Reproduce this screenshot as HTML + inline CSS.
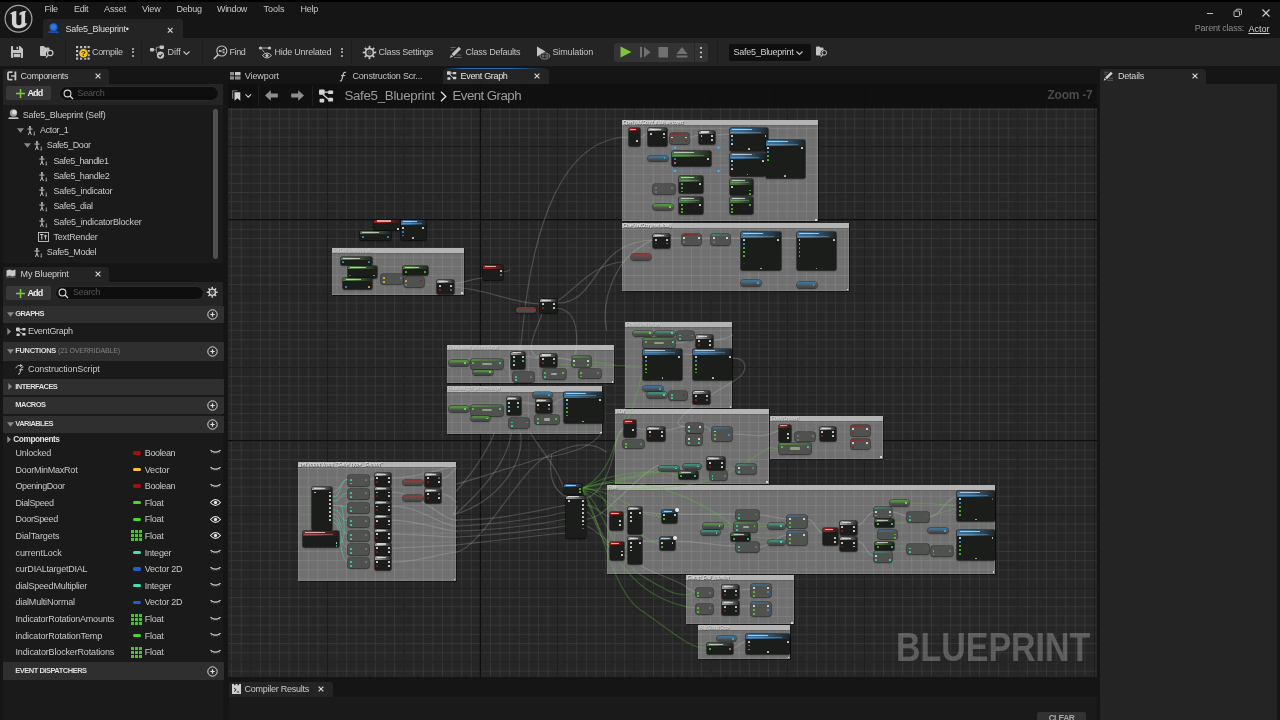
<!DOCTYPE html>
<html><head><meta charset="utf-8"><title>Safe5_Blueprint</title>
<style>
*{box-sizing:border-box;margin:0;padding:0}
html,body{width:1280px;height:720px;overflow:hidden;background:#151515}
body{font-family:"Liberation Sans",sans-serif;color:#c0c0c0;font-size:9px;position:relative}
.a{position:absolute}
.t{position:absolute;white-space:nowrap;line-height:1.15}
#root{position:absolute;left:0;top:0;width:1280px;height:720px;overflow:hidden;will-change:transform}
svg{position:absolute;overflow:visible}
#graph{position:absolute;left:227.5px;top:84px;width:869px;height:593px;overflow:hidden;background:#262626}
#graph .cm{position:absolute;background-color:rgba(131,131,131,.8);background-image:linear-gradient(90deg,rgba(255,255,255,.07) 0,rgba(255,255,255,.07) .9px,transparent .9px),linear-gradient(rgba(255,255,255,.07) 0,rgba(255,255,255,.07) .9px,transparent .9px);background-size:9.5875px 9.205px;box-shadow:inset -.6px -.6px 0 rgba(175,175,175,.45),inset .6px 0 0 rgba(175,175,175,.3),.8px .8px 0 rgba(6,6,6,.7)}
#graph .cm i{position:absolute;left:0;right:0;top:0;height:5.4px;background:#b4b4b4;box-shadow:0 .8px 0 rgba(70,70,70,.35)}
#graph .cm u{position:absolute;left:1.3px;top:.2px;font-size:4.8px;line-height:5.4px;white-space:nowrap;color:#f4f4f4;text-decoration:none;font-style:italic;text-shadow:.5px .5px 0 rgba(0,0,0,.75);opacity:.8}
#graph .cm::after{content:"";position:absolute;right:.8px;bottom:.8px;width:1.7px;height:1.7px;background:#e8e8e8;opacity:.85}
.n{position:absolute;background:#1b1d1b;border-radius:1.5px;box-shadow:0 0 0 .8px rgba(10,10,10,.6),0 1px 2px rgba(0,0,0,.5);overflow:hidden}
.g{position:absolute;background:#505250;border-radius:2.5px;box-shadow:0 0 0 .8px rgba(30,30,30,.55),0 1px 2px rgba(0,0,0,.4);overflow:hidden}
.h{position:absolute;left:0;right:0;top:0}
.p{position:absolute;width:1.9px;height:1.9px;border-radius:.6px;opacity:.8}
</style></head><body><div id="root">
<div class="a" style="left:0px;top:0px;width:1280px;height:2px;background:#000;"></div>
<div class="a" style="left:0px;top:2px;width:1280px;height:36px;background:#151515;"></div>
<svg style="left:4px;top:4px" width="30" height="30" viewBox="0 0 30 30"><circle cx="14.500" cy="14.750" r="13.400" fill="#1a1a1a" stroke="#a4a4a4" stroke-width="1.200"/><path d="M5.500 10.400C7.200 8.300 9.500 7.200 12.300 7V18.500C12.300 20.200 13.200 21.200 14.900 21.200C16.500 21.200 17.400 20.400 17.400 18.800V10.200L15.500 11.500V9C17.500 7.600 19.800 6.900 22.800 6.800C21.500 7.800 21.100 8.800 21.100 10V18.300C21.100 19.500 21.900 19.800 23.400 18.900C22 22.200 18.700 24.300 14.600 24.300C10.600 24.300 7.900 22.200 7.900 18.400V11.300C7.900 10.100 7 9.700 5.500 10.400Z" fill="#d4d4d4"/></svg>
<div class="t" style="left:44.6px;top:4.3px;font-size:9px;color:#c6c6c6;letter-spacing:-0.351px;">File</div>
<div class="t" style="left:74px;top:4.3px;font-size:9px;color:#c6c6c6;letter-spacing:-0.377px;">Edit</div>
<div class="t" style="left:104px;top:4.3px;font-size:9px;color:#c6c6c6;letter-spacing:-0.082px;">Asset</div>
<div class="t" style="left:142px;top:4.3px;font-size:9px;color:#c6c6c6;letter-spacing:-0.236px;">View</div>
<div class="t" style="left:176.6px;top:4.3px;font-size:9px;color:#c6c6c6;letter-spacing:-0.304px;">Debug</div>
<div class="t" style="left:217px;top:4.3px;font-size:9px;color:#c6c6c6;letter-spacing:-0.335px;">Window</div>
<div class="t" style="left:263.5px;top:4.3px;font-size:9px;color:#c6c6c6;letter-spacing:-0.002px;">Tools</div>
<div class="t" style="left:300.5px;top:4.3px;font-size:9px;color:#c6c6c6;letter-spacing:-0.252px;">Help</div>
<div class="a" style="left:43px;top:19px;width:140px;height:19px;background:#242424;border-radius:3px 3px 0 0"></div>
<svg style="left:47px;top:22px" width="13" height="13" viewBox="0 0 13 13"><circle cx="6.500" cy="5.200" r="4" fill="#1d5fd0"/><circle cx="6.500" cy="4.800" r="2.600" fill="#2f78e8"/><rect x="1.500" y="9.300" width="10" height="1.800" rx=".6" fill="#1a4fb0"/></svg>
<div class="t" style="left:65.5px;top:24px;font-size:9px;color:#dcdcdc;letter-spacing:-0.247px;">Safe5_Blueprint•</div>
<div class="t" style="left:167px;top:23.5px;font-size:11px;color:#c8c8c8;font-weight:bold">×</div>
<div class="a" style="left:1207px;top:13px;width:6px;height:1px;background:#bdbdbd;"></div>
<svg style="left:1233px;top:8px" width="10" height="10" viewBox="0 0 10 10"><rect x="1" y="3" width="5.500" height="5.500" rx="1" fill="none" stroke="#bdbdbd" stroke-width="1"/><path d="M3 3V2.200a1 1 0 0 1 1-1h3.500a1 1 0 0 1 1 1v3.500a1 1 0 0 1-1 1H6.500" fill="none" stroke="#bdbdbd" stroke-width="1"/></svg>
<svg style="left:1262px;top:9px" width="8" height="8" viewBox="0 0 8 8"><path d="M.5.500l7 7M7.500.5l-7 7" stroke="#d0d0d0" stroke-width="1.100"/></svg>
<div class="t" style="left:1194.8px;top:23.3px;font-size:9px;color:#8a8a8a;letter-spacing:-0.217px;">Parent class:</div>
<div class="t" style="left:1248.4px;top:23.8px;font-size:9px;color:#d2d2d2;letter-spacing:0.019px;text-decoration:underline">Actor</div>
<div class="a" style="left:0px;top:38px;width:1280px;height:28px;background:#242424;"></div>
<div class="a" style="left:65px;top:40px;width:1px;height:24px;background:#1c1c1c;"></div>
<div class="a" style="left:141px;top:40px;width:1px;height:24px;background:#1c1c1c;"></div>
<div class="a" style="left:202px;top:40px;width:1px;height:24px;background:#1c1c1c;"></div>
<div class="a" style="left:351px;top:40px;width:1px;height:24px;background:#1c1c1c;"></div>
<div class="a" style="left:717px;top:40px;width:1px;height:24px;background:#1c1c1c;"></div>
<svg style="left:11px;top:46px" width="12" height="12" viewBox="0 0 12 12"><path d="M0 1a1 1 0 0 1 1-1h8l3 3v8a1 1 0 0 1-1 1H1a1 1 0 0 1-1-1z" fill="#c4c4c4"/><rect x="2" y="0" width="6" height="4" fill="#242424"/><rect x="5.500" y=".8" width="1.600" height="2.400" fill="#c4c4c4"/><rect x="2" y="7" width="8" height="5" fill="#242424"/><rect x="2.700" y="7.800" width="6.600" height="3.400" fill="#c4c4c4"/></svg>
<svg style="left:40px;top:45px" width="16" height="14" viewBox="0 0 16 14"><path d="M0 2a1 1 0 0 1 1-1h3l1 1.500h3.500a1 1 0 0 1 1 1V5a4 4 0 0 0-3 6H1a1 1 0 0 1-1-1z" fill="#c4c4c4"/><circle cx="10.200" cy="8" r="2.700" fill="none" stroke="#c4c4c4" stroke-width="1.200"/><path d="M8.300 10l-2.300 2.600" stroke="#c4c4c4" stroke-width="1.400"/></svg>
<svg style="left:75px;top:45px" width="16" height="15" viewBox="0 0 16 15"><g fill="#bdbdbd"><rect x="1" y="1" width="2.200" height="2.200"/><rect x="5" y="1" width="2.200" height="2.200"/><rect x="9" y="1" width="2.200" height="2.200"/><rect x="12.500" y="1" width="2.200" height="2.200"/><rect x="1" y="5" width="2.200" height="2.200"/><rect x="1" y="9" width="2.200" height="2.200"/><rect x="1" y="12.500" width="2.200" height="2.200"/><rect x="5" y="12.500" width="2.200" height="2.200"/><rect x="9" y="12.500" width="2.200" height="2.200"/><rect x="12.500" y="12.500" width="2.200" height="2.200"/><rect x="12.500" y="9" width="2.200" height="2.200"/><rect x="12.500" y="5" width="2.200" height="2.200"/></g><circle cx="8.500" cy="8.300" r="4.700" fill="#f2c60e" stroke="#242424" stroke-width=".8"/><text x="8.500" y="11.300" font-family="Liberation Sans" font-weight="bold" font-size="8" text-anchor="middle" fill="#1a1a1a">?</text></svg>
<div class="t" style="left:92px;top:47px;font-size:9px;color:#c4c4c4;letter-spacing:-0.345px;">Compile</div>
<div class="a" style="left:132.3px;top:47.7px;width:2px;height:2px;background:#c4c4c4;border-radius:1px"></div>
<div class="a" style="left:132.3px;top:51.4px;width:2px;height:2px;background:#c4c4c4;border-radius:1px"></div>
<div class="a" style="left:132.3px;top:55.1px;width:2px;height:2px;background:#c4c4c4;border-radius:1px"></div>
<svg style="left:150px;top:45px" width="16" height="15" viewBox="0 0 16 15"><rect x="0" y="3" width="4" height="3.400" rx=".8" fill="#c4c4c4"/><rect x="9.500" y=".5" width="4.500" height="3.400" rx=".8" fill="#c4c4c4"/><path d="M4 4.700h2.500V2.200h3M6.500 4.700V8" stroke="#8a8a8a" stroke-width=".9" fill="none"/><circle cx="10.500" cy="10.200" r="3.600" fill="#c4c4c4"/><path d="M8.800 10.200l1.300 1.400 2.300-2.700" stroke="#242424" stroke-width="1.100" fill="none"/></svg>
<div class="t" style="left:167.5px;top:47px;font-size:9px;color:#c4c4c4;letter-spacing:-0.059px;">Diff</div>
<svg style="left:183.3px;top:50.5px" width="7" height="4.0" viewBox="0 0 7 4"><path d="M.5.500l3 3 3-3" fill="none" stroke="#c4c4c4" stroke-width="1.100"/></svg>
<svg style="left:213px;top:45px" width="15" height="15" viewBox="0 0 15 15"><circle cx="8.800" cy="6" r="5" fill="none" stroke="#c4c4c4" stroke-width="1.100"/><path d="M5.200 9.600L.8 14" stroke="#c4c4c4" stroke-width="1.500"/><circle cx="6.800" cy="6" r="1" fill="#c4c4c4"/><circle cx="10.800" cy="4.600" r=".9" fill="#c4c4c4"/><circle cx="10.800" cy="7.400" r=".9" fill="#c4c4c4"/><path d="M6.800 6L10.800 4.600M6.800 6l4 1.400" stroke="#c4c4c4" stroke-width=".6"/></svg>
<div class="t" style="left:229.5px;top:47px;font-size:9px;color:#c4c4c4;letter-spacing:-0.377px;">Find</div>
<svg style="left:258px;top:45px" width="15" height="15" viewBox="0 0 15 15"><circle cx="2.500" cy="3" r="1.600" fill="#c4c4c4"/><circle cx="11.500" cy="3" r="1.600" fill="#c4c4c4"/><path d="M2.500 3h9M4 4.500L6.500 7.500" stroke="#c4c4c4" stroke-width=".8"/><path d="M4.500 10.500q4.500-5 9 0q-4.500 5-9 0z" fill="none" stroke="#c4c4c4" stroke-width="1"/><circle cx="9" cy="10.500" r="1.500" fill="#c4c4c4"/></svg>
<div class="t" style="left:274.5px;top:47px;font-size:9px;color:#c4c4c4;letter-spacing:-0.235px;">Hide Unrelated</div>
<div class="a" style="left:341px;top:47.7px;width:2px;height:2px;background:#c4c4c4;border-radius:1px"></div>
<div class="a" style="left:341px;top:51.4px;width:2px;height:2px;background:#c4c4c4;border-radius:1px"></div>
<div class="a" style="left:341px;top:55.1px;width:2px;height:2px;background:#c4c4c4;border-radius:1px"></div>
<svg style="left:363px;top:46px" width="13" height="13" viewBox="0 0 13 13"><rect x="5.600" y="-.2" width="1.800" height="3" fill="#c4c4c4" transform="rotate(0 6.500 6.500)"/><rect x="5.600" y="-.2" width="1.800" height="3" fill="#c4c4c4" transform="rotate(45 6.500 6.500)"/><rect x="5.600" y="-.2" width="1.800" height="3" fill="#c4c4c4" transform="rotate(90 6.500 6.500)"/><rect x="5.600" y="-.2" width="1.800" height="3" fill="#c4c4c4" transform="rotate(135 6.500 6.500)"/><rect x="5.600" y="-.2" width="1.800" height="3" fill="#c4c4c4" transform="rotate(180 6.500 6.500)"/><rect x="5.600" y="-.2" width="1.800" height="3" fill="#c4c4c4" transform="rotate(225 6.500 6.500)"/><rect x="5.600" y="-.2" width="1.800" height="3" fill="#c4c4c4" transform="rotate(270 6.500 6.500)"/><rect x="5.600" y="-.2" width="1.800" height="3" fill="#c4c4c4" transform="rotate(315 6.500 6.500)"/><circle cx="6.500" cy="6.500" r="3.900" fill="none" stroke="#c4c4c4" stroke-width="1.700"/><circle cx="6.500" cy="6.500" r="1.500" fill="none" stroke="#c4c4c4" stroke-width=".6" opacity=".7"/></svg>
<div class="t" style="left:378.5px;top:47px;font-size:9px;color:#c4c4c4;letter-spacing:-0.209px;">Class Settings</div>
<svg style="left:449px;top:46px" width="13" height="13" viewBox="0 0 13 13"><path d="M1.500 1.500h5M1.500 4h3M5 11.500h7.500M7.500 9h5" stroke="#6e6e6e" stroke-width=".9"/><path d="M9.800.8l2.200 2.200-7.200 7.200-2.200-2.200z" fill="#c4c4c4"/><path d="M2 8.800l2 2-3.200 1.200z" fill="#c4c4c4"/></svg>
<div class="t" style="left:465.5px;top:47px;font-size:9px;color:#c4c4c4;letter-spacing:-0.223px;">Class Defaults</div>
<svg style="left:536px;top:45px" width="15" height="15" viewBox="0 0 15 15"><path d="M1 1.500v10l8.500-5z" fill="#c4c4c4"/><ellipse cx="8.800" cy="11" rx="4.700" ry="3" fill="#242424" stroke="#9a9a9a" stroke-width=".8"/><circle cx="7" cy="11" r="1" fill="none" stroke="#9a9a9a" stroke-width=".7"/><circle cx="10.800" cy="11" r="1.200" fill="none" stroke="#9a9a9a" stroke-width=".7"/></svg>
<div class="t" style="left:552.5px;top:47px;font-size:9px;color:#c4c4c4;letter-spacing:-0.142px;">Simulation</div>
<div class="a" style="left:614px;top:43px;width:94px;height:18.5px;background:#333;border-radius:3px"></div>
<div class="a" style="left:693.5px;top:43px;width:1px;height:18.5px;background:#262626;"></div>
<svg style="left:614px;top:43px" width="94" height="19" viewBox="0 0 94 19"><path d="M6.500 3.500v11l11-5.500z" fill="#7dc43c"/><rect x="26" y="4" width="2" height="10.500" fill="#707070"/><path d="M30 4v10.500l6.500-5.250z" fill="#707070"/><rect x="44.500" y="4" width="9.500" height="10.500" fill="#707070"/><path d="M62.500 11l5.500-7 5.500 7z" fill="#707070"/><rect x="62.500" y="12.500" width="11" height="2" fill="#707070"/><circle cx="87" cy="5" r="1" fill="#d8d8d8"/><circle cx="87" cy="9.500" r="1" fill="#d8d8d8"/><circle cx="87" cy="14" r="1" fill="#d8d8d8"/></svg>
<div class="a" style="left:728.5px;top:43.5px;width:82.5px;height:17.5px;background:#0f0f0f;border-radius:2px"></div>
<div class="t" style="left:733.5px;top:47px;font-size:9px;color:#d0d0d0;letter-spacing:-0.270px;">Safe5_Blueprint</div>
<svg style="left:796px;top:50.5px" width="7" height="4.0" viewBox="0 0 7 4"><path d="M.5.500l3 3 3-3" fill="none" stroke="#c4c4c4" stroke-width="1.100"/></svg>
<svg style="left:816px;top:46px" width="13" height="12" viewBox="0 0 13 12"><path d="M0 1.500a1 1 0 0 1 1-1h2.500l.8 1h2.200a1 1 0 0 1 1 1V4a3.400 3.400 0 0 0-2.300 5.500H1a1 1 0 0 1-1-1z" fill="#c4c4c4"/><circle cx="8.300" cy="6.800" r="2.300" fill="none" stroke="#c4c4c4" stroke-width="1"/><path d="M6.700 8.500l-1.900 2.200" stroke="#c4c4c4" stroke-width="1.200"/></svg>
<div class="a" style="left:3px;top:68.5px;width:105.5px;height:16px;background:#242424;border-radius:3px 3px 0 0"></div>
<svg style="left:6.500px;top:71px" width="10" height="10" viewBox="0 0 10 10"><path d="M5.500 1.200H2a1 1 0 0 0-1 1v5.400a1 1 0 0 0 1 1h3.500" fill="none" stroke="#c8c8c8" stroke-width="1.700"/><path d="M4 5h4.500" stroke="#c8c8c8" stroke-width="1.400"/><rect x="7.500" y="0.500" width="1.800" height="8.800" fill="#c8c8c8"/></svg>
<div class="t" style="left:20.6px;top:71px;font-size:9px;color:#d0d0d0;letter-spacing:-0.353px;">Components</div>
<svg style="left:94.5px;top:73px" width="6" height="6" viewBox="0 0 6 6"><path d="M.6.600l4.800 4.800M5.400.6L.6 5.400" stroke="#d4d4d4" stroke-width="1.200"/></svg>
<div class="a" style="left:3px;top:84px;width:220.4px;height:20.7px;background:#242424;"></div>
<div class="a" style="left:3px;top:104.7px;width:220.4px;height:158px;background:#1a1a1a;"></div>
<div class="a" style="left:6px;top:86.2px;width:44.5px;height:13.8px;background:#383838;border-radius:2px"></div><svg style="left:15.5px;top:88.7px" width="9" height="9" viewBox="0 0 9 9"><path d="M4.500 0v9M0 4.500h9" stroke="#7ccf32" stroke-width="1.500"/></svg><div class="t" style="left:27.5px;top:88.2px;font-size:9px;color:#f0f0f0;letter-spacing:-0.932px;font-weight:bold">Add</div>
<div class="a" style="left:60px;top:87px;width:157.5px;height:12.5px;background:#0e0e0e;border-radius:6.500px;box-shadow:0 0 0 1px #2b2b2b"></div><svg style="left:62.5px;top:88.5px" width="11" height="11" viewBox="0 0 11 11"><circle cx="4.500" cy="4.500" r="3.400" fill="none" stroke="#d8d8d8" stroke-width="1.100"/><path d="M7 7l3 3" stroke="#d8d8d8" stroke-width="1.300"/></svg><div class="t" style="left:77.5px;top:87.7px;font-size:9px;color:#555;letter-spacing:-0.253px;">Search</div>
<div class="a" style="left:213.2px;top:108.5px;width:4.6px;height:150.5px;background:#505050;border-radius:2.300px"></div>
<svg style="left:8px;top:109.1px" width="11" height="11" viewBox="0 0 11 11"><circle cx="5.500" cy="4" r="3.700" fill="#9a9a9a"/><circle cx="6.300" cy="3.300" r="2.300" fill="#dadada"/><path d="M1 8.300h9l.8 1.800H.2z" fill="#bdbdbd"/></svg>
<div class="t" style="left:22.8px;top:109.5px;font-size:9px;color:#c8c8c8;letter-spacing:-0.248px;">Safe5_Blueprint (Self)</div>
<svg style="left:17px;top:127.7px" width="7" height="5" viewBox="0 0 7 5"><path d="M0 .3h7L3.500 4.700z" fill="#8a8a8a"/></svg>
<svg style="left:26.7px;top:125.7px" width="9.300" height="9.300" viewBox="0 0 11 11"><circle cx="3.500" cy="1.300" r="1.200" fill="#d0d0d0"/><path d="M.5 3.600h6M3.500 2.500v4M3.500 6.300L1.600 10.500M3.500 6.300l1.600 4.200" stroke="#d0d0d0" stroke-width="1.100" fill="none"/><path d="M8.600 6.500v4M7.600 10.500h2" stroke="#b0b0b0" stroke-width="1"/></svg>
<div class="t" style="left:40px;top:124.9px;font-size:9px;color:#c8c8c8;letter-spacing:-0.360px;">Actor_1</div>
<svg style="left:23.5px;top:143.0px" width="7" height="5" viewBox="0 0 7 5"><path d="M0 .3h7L3.500 4.700z" fill="#8a8a8a"/></svg>
<svg style="left:33.7px;top:141.0px" width="9.300" height="9.300" viewBox="0 0 11 11"><circle cx="3.500" cy="1.300" r="1.200" fill="#d0d0d0"/><path d="M.5 3.600h6M3.500 2.500v4M3.500 6.300L1.600 10.500M3.500 6.300l1.600 4.200" stroke="#d0d0d0" stroke-width="1.100" fill="none"/><path d="M8.600 6.500v4M7.600 10.500h2" stroke="#b0b0b0" stroke-width="1"/></svg>
<div class="t" style="left:46.8px;top:140.20000000000002px;font-size:9px;color:#c8c8c8;letter-spacing:-0.423px;">Safe5_Door</div>
<svg style="left:38.7px;top:156.29999999999998px" width="9.300" height="9.300" viewBox="0 0 11 11"><circle cx="3.500" cy="1.300" r="1.200" fill="#d0d0d0"/><path d="M.5 3.600h6M3.500 2.500v4M3.500 6.300L1.600 10.500M3.500 6.300l1.600 4.200" stroke="#d0d0d0" stroke-width="1.100" fill="none"/><path d="M8.600 6.500v4M7.600 10.500h2" stroke="#b0b0b0" stroke-width="1"/></svg>
<div class="t" style="left:53.4px;top:155.5px;font-size:9px;color:#c8c8c8;letter-spacing:-0.420px;">Safe5_handle1</div>
<svg style="left:38.7px;top:171.6px" width="9.300" height="9.300" viewBox="0 0 11 11"><circle cx="3.500" cy="1.300" r="1.200" fill="#d0d0d0"/><path d="M.5 3.600h6M3.500 2.500v4M3.500 6.300L1.600 10.500M3.500 6.300l1.600 4.200" stroke="#d0d0d0" stroke-width="1.100" fill="none"/><path d="M8.600 6.500v4M7.600 10.500h2" stroke="#b0b0b0" stroke-width="1"/></svg>
<div class="t" style="left:53.4px;top:170.8px;font-size:9px;color:#c8c8c8;letter-spacing:-0.351px;">Safe5_handle2</div>
<svg style="left:38.7px;top:186.89999999999998px" width="9.300" height="9.300" viewBox="0 0 11 11"><circle cx="3.500" cy="1.300" r="1.200" fill="#d0d0d0"/><path d="M.5 3.600h6M3.500 2.500v4M3.500 6.300L1.600 10.500M3.500 6.300l1.600 4.200" stroke="#d0d0d0" stroke-width="1.100" fill="none"/><path d="M8.600 6.500v4M7.600 10.500h2" stroke="#b0b0b0" stroke-width="1"/></svg>
<div class="t" style="left:53.4px;top:186.1px;font-size:9px;color:#c8c8c8;letter-spacing:-0.243px;">Safe5_indicator</div>
<svg style="left:38.7px;top:202.2px" width="9.300" height="9.300" viewBox="0 0 11 11"><circle cx="3.500" cy="1.300" r="1.200" fill="#d0d0d0"/><path d="M.5 3.600h6M3.500 2.500v4M3.500 6.300L1.600 10.500M3.500 6.300l1.600 4.200" stroke="#d0d0d0" stroke-width="1.100" fill="none"/><path d="M8.600 6.500v4M7.600 10.500h2" stroke="#b0b0b0" stroke-width="1"/></svg>
<div class="t" style="left:53.4px;top:201.4px;font-size:9px;color:#c8c8c8;letter-spacing:-0.313px;">Safe5_dial</div>
<svg style="left:38.7px;top:217.5px" width="9.300" height="9.300" viewBox="0 0 11 11"><circle cx="3.500" cy="1.300" r="1.200" fill="#d0d0d0"/><path d="M.5 3.600h6M3.500 2.500v4M3.500 6.300L1.600 10.500M3.500 6.300l1.600 4.200" stroke="#d0d0d0" stroke-width="1.100" fill="none"/><path d="M8.600 6.500v4M7.600 10.500h2" stroke="#b0b0b0" stroke-width="1"/></svg>
<div class="t" style="left:53.4px;top:216.70000000000002px;font-size:9px;color:#c8c8c8;letter-spacing:-0.202px;">Safe5_indicatorBlocker</div>
<svg style="left:38px;top:232.1px" width="11" height="10" viewBox="0 0 11 10"><rect x=".5" y=".5" width="10" height="9" fill="none" stroke="#c8c8c8" stroke-width=".9"/><path d="M2 2.500h3.500M3.750 2.500v5M6 4h3M7.500 2.800v4.700" stroke="#c8c8c8" stroke-width="1.100"/></svg>
<div class="t" style="left:53.4px;top:232.0px;font-size:9px;color:#c8c8c8;letter-spacing:-0.172px;">TextRender</div>
<svg style="left:33.7px;top:248.1px" width="9.300" height="9.300" viewBox="0 0 11 11"><circle cx="3.500" cy="1.300" r="1.200" fill="#d0d0d0"/><path d="M.5 3.600h6M3.500 2.500v4M3.500 6.300L1.600 10.500M3.500 6.300l1.600 4.200" stroke="#d0d0d0" stroke-width="1.100" fill="none"/><path d="M8.600 6.500v4M7.600 10.500h2" stroke="#b0b0b0" stroke-width="1"/></svg>
<div class="t" style="left:46.8px;top:247.3px;font-size:9px;color:#c8c8c8;letter-spacing:-0.331px;">Safe5_Model</div>
<div class="a" style="left:3px;top:267px;width:105.5px;height:15px;background:#242424;border-radius:3px 3px 0 0"></div>
<svg style="left:6px;top:269px" width="10" height="9" viewBox="0 0 10 9"><path d="M.5 1.500l3-1 3 1 3-1v6l-3 1-3-1-3 1z" fill="#c8c8c8"/><path d="M.5 8h9" stroke="#8a8a8a" stroke-width=".8"/></svg>
<div class="t" style="left:20.6px;top:269px;font-size:9px;color:#d0d0d0;letter-spacing:-0.160px;">My Blueprint</div>
<svg style="left:94.5px;top:271px" width="6" height="6" viewBox="0 0 6 6"><path d="M.6.600l4.800 4.800M5.400.6L.6 5.400" stroke="#d4d4d4" stroke-width="1.200"/></svg>
<div class="a" style="left:3px;top:282px;width:220.4px;height:438px;background:#1a1a1a;"></div>
<div class="a" style="left:3px;top:282px;width:220.4px;height:23.5px;background:#242424;"></div>
<div class="a" style="left:6px;top:286px;width:44.5px;height:13.8px;background:#383838;border-radius:2px"></div><svg style="left:15.5px;top:288.5px" width="9" height="9" viewBox="0 0 9 9"><path d="M4.500 0v9M0 4.500h9" stroke="#7ccf32" stroke-width="1.500"/></svg><div class="t" style="left:27.5px;top:288px;font-size:9px;color:#f0f0f0;letter-spacing:-0.932px;font-weight:bold">Add</div>
<div class="a" style="left:55.5px;top:286.5px;width:147.5px;height:12.5px;background:#0e0e0e;border-radius:6.500px;box-shadow:0 0 0 1px #2b2b2b"></div><svg style="left:58.0px;top:288.0px" width="11" height="11" viewBox="0 0 11 11"><circle cx="4.500" cy="4.500" r="3.400" fill="none" stroke="#d8d8d8" stroke-width="1.100"/><path d="M7 7l3 3" stroke="#d8d8d8" stroke-width="1.300"/></svg><div class="t" style="left:73.0px;top:287.2px;font-size:9px;color:#555;letter-spacing:-0.253px;">Search</div>
<svg style="left:207.3px;top:287.4px" width="10.5" height="10.5" viewBox="0 0 13 13"><rect x="5.600" y="-.2" width="1.800" height="3" fill="#d0d0d0" transform="rotate(0 6.500 6.500)"/><rect x="5.600" y="-.2" width="1.800" height="3" fill="#d0d0d0" transform="rotate(45 6.500 6.500)"/><rect x="5.600" y="-.2" width="1.800" height="3" fill="#d0d0d0" transform="rotate(90 6.500 6.500)"/><rect x="5.600" y="-.2" width="1.800" height="3" fill="#d0d0d0" transform="rotate(135 6.500 6.500)"/><rect x="5.600" y="-.2" width="1.800" height="3" fill="#d0d0d0" transform="rotate(180 6.500 6.500)"/><rect x="5.600" y="-.2" width="1.800" height="3" fill="#d0d0d0" transform="rotate(225 6.500 6.500)"/><rect x="5.600" y="-.2" width="1.800" height="3" fill="#d0d0d0" transform="rotate(270 6.500 6.500)"/><rect x="5.600" y="-.2" width="1.800" height="3" fill="#d0d0d0" transform="rotate(315 6.500 6.500)"/><circle cx="6.500" cy="6.500" r="3.900" fill="none" stroke="#d0d0d0" stroke-width="1.700"/><circle cx="6.500" cy="6.500" r="1.500" fill="none" stroke="#d0d0d0" stroke-width=".6" opacity=".7"/></svg>
<div class="a" style="left:3px;top:305.8px;width:220.6px;height:17.19999999999999px;background:#2f2f2f;"></div>
<svg style="left:7px;top:312.09999999999997px" width="7" height="5" viewBox="0 0 7 5"><path d="M0 .3h7L3.500 4.700z" fill="#8a8a8a"/></svg>
<div class="t" style="left:15.3px;top:310.29999999999995px;font-size:7.5px;color:#dedede;letter-spacing:-0.598px;font-weight:bold">GRAPHS</div>
<svg style="left:207.2px;top:309.0px" width="11" height="11" viewBox="0 0 11 11"><circle cx="5.500" cy="5.500" r="4.700" fill="none" stroke="#d8d8d8" stroke-width="1"/><path d="M5.500 3.300v4.400M3.300 5.500h4.400" stroke="#e0e0e0" stroke-width="1.200"/></svg>
<svg style="left:6.5px;top:328px" width="4" height="7" viewBox="0 0 4 7"><path d="M.3 0v7L4 3.500z" fill="#8a8a8a"/></svg>
<svg style="left:15.500px;top:326.500px" width="10" height="10" viewBox="0 0 10 10"><rect x="0" y="0.500" width="3.700" height="3.700" rx=".7" fill="#d0d0d0"/><rect x="6.300" y="1" width="3.200" height="2.500" rx=".6" fill="#d0d0d0"/><rect x=".5" y="6.500" width="3.200" height="2.500" rx=".6" fill="#d0d0d0"/><rect x="6.300" y="6" width="3.200" height="2.500" rx=".6" fill="#d0d0d0"/><path d="M3.700 2.300h2.600M2.800 3.800l3.500 3" stroke="#d0d0d0" stroke-width=".9"/></svg>
<div class="t" style="left:28px;top:326px;font-size:9px;color:#c8c8c8;letter-spacing:-0.323px;">EventGraph</div>
<div class="a" style="left:3px;top:342px;width:220.6px;height:18.5px;background:#2f2f2f;"></div>
<svg style="left:7px;top:348.95px" width="7" height="5" viewBox="0 0 7 5"><path d="M0 .3h7L3.500 4.700z" fill="#8a8a8a"/></svg>
<div class="t" style="left:15.3px;top:347.15px;font-size:7.5px;color:#dedede;letter-spacing:-0.350px;font-weight:bold">FUNCTIONS</div>
<div class="t" style="left:58px;top:347.45px;font-size:7px;color:#808080;letter-spacing:-0.137px;">(21 OVERRIDABLE)</div>
<svg style="left:207.2px;top:345.85px" width="11" height="11" viewBox="0 0 11 11"><circle cx="5.500" cy="5.500" r="4.700" fill="none" stroke="#d8d8d8" stroke-width="1"/><path d="M5.500 3.300v4.400M3.300 5.500h4.400" stroke="#e0e0e0" stroke-width="1.200"/></svg>
<svg style="left:15px;top:363.500px" width="11" height="11" viewBox="0 0 11 11" fill="none" stroke="#c8c8c8"><path d="M.8 4.200Q2 .9 5.800 1.600" stroke-width=".9"/><path d="M5.200 0L7.900 1.800 5 3.100z" fill="#c8c8c8" stroke="none"/><path d="M3 10.100Q4.500 10.600 5 8.600L6.100 4.400Q6.600 2.500 8.400 3" stroke-width="1"/><path d="M4.200 5.800H8.200" stroke-width=".9"/></svg>
<div class="t" style="left:28px;top:363.5px;font-size:9px;color:#c8c8c8;letter-spacing:-0.102px;">ConstructionScript</div>
<div class="a" style="left:3px;top:378.8px;width:220.6px;height:16.19999999999999px;background:#2f2f2f;"></div>
<svg style="left:8px;top:383.4px" width="4" height="7" viewBox="0 0 4 7"><path d="M.3 0v7L4 3.500z" fill="#8a8a8a"/></svg>
<div class="t" style="left:15.3px;top:382.79999999999995px;font-size:7.5px;color:#dedede;letter-spacing:-0.551px;font-weight:bold">INTERFACES</div>
<div class="a" style="left:3px;top:396.5px;width:220.6px;height:17.30000000000001px;background:#2f2f2f;"></div>
<div class="t" style="left:15.3px;top:401.04999999999995px;font-size:7.5px;color:#dedede;letter-spacing:-0.505px;font-weight:bold">MACROS</div>
<svg style="left:207.2px;top:399.75px" width="11" height="11" viewBox="0 0 11 11"><circle cx="5.500" cy="5.500" r="4.700" fill="none" stroke="#d8d8d8" stroke-width="1"/><path d="M5.500 3.300v4.400M3.300 5.500h4.400" stroke="#e0e0e0" stroke-width="1.200"/></svg>
<div class="a" style="left:3px;top:415.7px;width:220.6px;height:17.100000000000023px;background:#2f2f2f;"></div>
<svg style="left:7px;top:421.95px" width="7" height="5" viewBox="0 0 7 5"><path d="M0 .3h7L3.500 4.700z" fill="#8a8a8a"/></svg>
<div class="t" style="left:15.3px;top:420.15px;font-size:7.5px;color:#dedede;letter-spacing:-0.565px;font-weight:bold">VARIABLES</div>
<svg style="left:207.2px;top:418.85px" width="11" height="11" viewBox="0 0 11 11"><circle cx="5.500" cy="5.500" r="4.700" fill="none" stroke="#d8d8d8" stroke-width="1"/><path d="M5.500 3.300v4.400M3.300 5.500h4.400" stroke="#e0e0e0" stroke-width="1.200"/></svg>
<svg style="left:6.5px;top:435.5px" width="4" height="7" viewBox="0 0 4 7"><path d="M.3 0v7L4 3.500z" fill="#8a8a8a"/></svg>
<div class="t" style="left:13.3px;top:434.7px;font-size:8.3px;color:#e0e0e0;letter-spacing:-0.452px;font-weight:bold">Components</div>
<div class="t" style="left:15.5px;top:447.9px;font-size:9px;color:#c8c8c8;letter-spacing:-0.240px;">Unlocked</div>
<div class="a" style="left:132.5px;top:451.2px;width:8.5px;height:3.4px;background:#a30f0f;border-radius:1.700px"></div>
<div class="t" style="left:144.8px;top:447.9px;font-size:9px;color:#c8c8c8;letter-spacing:-0.376px;">Boolean</div>
<svg style="left:210.3px;top:449.4px" width="11" height="6" viewBox="0 0 11 6"><path d="M.5 1.200q5 4 10 0" fill="none" stroke="#d4d4d4" stroke-width="1.200"/><path d="M2 2.800l-.6.900M4.200 3.600l-.3 1M6.800 3.600l.3 1M9 2.800l.6.900" stroke="#bcbcbc" stroke-width=".6"/></svg>
<div class="t" style="left:15.5px;top:464.51px;font-size:9px;color:#c8c8c8;letter-spacing:-0.240px;">DoorMinMaxRot</div>
<div class="a" style="left:132.5px;top:467.81px;width:8.5px;height:3.4px;background:#f7c62f;border-radius:1.700px"></div>
<div class="t" style="left:144.8px;top:464.51px;font-size:9px;color:#c8c8c8;letter-spacing:-0.186px;">Vector</div>
<svg style="left:210.3px;top:466.01px" width="11" height="6" viewBox="0 0 11 6"><path d="M.5 1.200q5 4 10 0" fill="none" stroke="#d4d4d4" stroke-width="1.200"/><path d="M2 2.800l-.6.900M4.200 3.600l-.3 1M6.800 3.600l.3 1M9 2.800l.6.900" stroke="#bcbcbc" stroke-width=".6"/></svg>
<div class="t" style="left:15.5px;top:481.12px;font-size:9px;color:#c8c8c8;letter-spacing:-0.394px;">OpeningDoor</div>
<div class="a" style="left:132.5px;top:484.42px;width:8.5px;height:3.4px;background:#a30f0f;border-radius:1.700px"></div>
<div class="t" style="left:144.8px;top:481.12px;font-size:9px;color:#c8c8c8;letter-spacing:-0.376px;">Boolean</div>
<svg style="left:210.3px;top:482.62px" width="11" height="6" viewBox="0 0 11 6"><path d="M.5 1.200q5 4 10 0" fill="none" stroke="#d4d4d4" stroke-width="1.200"/><path d="M2 2.800l-.6.900M4.200 3.600l-.3 1M6.800 3.600l.3 1M9 2.800l.6.900" stroke="#bcbcbc" stroke-width=".6"/></svg>
<div class="t" style="left:15.5px;top:497.72999999999996px;font-size:9px;color:#c8c8c8;letter-spacing:-0.381px;">DialSpeed</div>
<div class="a" style="left:132.5px;top:501.03px;width:8.5px;height:3.4px;background:#4fd62a;border-radius:1.700px"></div>
<div class="t" style="left:144.8px;top:497.72999999999996px;font-size:9px;color:#c8c8c8;letter-spacing:-0.262px;">Float</div>
<svg style="left:210.3px;top:499.22999999999996px" width="11" height="7" viewBox="0 0 11 7"><path d="M.5 3.500q5-6 10 0q-5 6-10 0z" fill="none" stroke="#e4e4e4" stroke-width="1.100"/><circle cx="5.500" cy="3.500" r="1.700" fill="#e4e4e4"/></svg>
<div class="t" style="left:15.5px;top:514.3399999999999px;font-size:9px;color:#c8c8c8;letter-spacing:-0.359px;">DoorSpeed</div>
<div class="a" style="left:132.5px;top:517.6399999999999px;width:8.5px;height:3.4px;background:#4fd62a;border-radius:1.700px"></div>
<div class="t" style="left:144.8px;top:514.3399999999999px;font-size:9px;color:#c8c8c8;letter-spacing:-0.262px;">Float</div>
<svg style="left:210.3px;top:515.8399999999999px" width="11" height="7" viewBox="0 0 11 7"><path d="M.5 3.500q5-6 10 0q-5 6-10 0z" fill="none" stroke="#e4e4e4" stroke-width="1.100"/><circle cx="5.500" cy="3.500" r="1.700" fill="#e4e4e4"/></svg>
<div class="t" style="left:15.5px;top:530.9499999999999px;font-size:9px;color:#c8c8c8;letter-spacing:-0.093px;">DialTargets</div>
<svg style="left:130.8px;top:530.4499999999999px" width="11" height="11" viewBox="0 0 11 11"><rect x="0" y="0" width="3" height="3" fill="#46c81e"/><rect x="0" y="4" width="3" height="3" fill="#46c81e"/><rect x="0" y="8" width="3" height="3" fill="#46c81e"/><rect x="4" y="0" width="3" height="3" fill="#46c81e"/><rect x="4" y="4" width="3" height="3" fill="#46c81e"/><rect x="4" y="8" width="3" height="3" fill="#46c81e"/><rect x="8" y="0" width="3" height="3" fill="#46c81e"/><rect x="8" y="4" width="3" height="3" fill="#46c81e"/><rect x="8" y="8" width="3" height="3" fill="#46c81e"/></svg>
<div class="t" style="left:144.8px;top:530.9499999999999px;font-size:9px;color:#c8c8c8;letter-spacing:-0.262px;">Float</div>
<svg style="left:210.3px;top:532.4499999999999px" width="11" height="7" viewBox="0 0 11 7"><path d="M.5 3.500q5-6 10 0q-5 6-10 0z" fill="none" stroke="#e4e4e4" stroke-width="1.100"/><circle cx="5.500" cy="3.500" r="1.700" fill="#e4e4e4"/></svg>
<div class="t" style="left:15.5px;top:547.56px;font-size:9px;color:#c8c8c8;letter-spacing:-0.084px;">currentLock</div>
<div class="a" style="left:132.5px;top:550.8599999999999px;width:8.5px;height:3.4px;background:#3fe3b5;border-radius:1.700px"></div>
<div class="t" style="left:144.8px;top:547.56px;font-size:9px;color:#c8c8c8;letter-spacing:-0.231px;">Integer</div>
<svg style="left:210.3px;top:549.06px" width="11" height="6" viewBox="0 0 11 6"><path d="M.5 1.200q5 4 10 0" fill="none" stroke="#d4d4d4" stroke-width="1.200"/><path d="M2 2.800l-.6.900M4.200 3.600l-.3 1M6.800 3.600l.3 1M9 2.800l.6.900" stroke="#bcbcbc" stroke-width=".6"/></svg>
<div class="t" style="left:15.5px;top:564.17px;font-size:9px;color:#c8c8c8;letter-spacing:-0.214px;">curDIALtargetDIAL</div>
<div class="a" style="left:132.5px;top:567.4699999999999px;width:8.5px;height:3.4px;background:#1f5fd6;border-radius:1.700px"></div>
<div class="t" style="left:144.8px;top:564.17px;font-size:9px;color:#c8c8c8;letter-spacing:-0.224px;">Vector 2D</div>
<svg style="left:210.3px;top:565.67px" width="11" height="6" viewBox="0 0 11 6"><path d="M.5 1.200q5 4 10 0" fill="none" stroke="#d4d4d4" stroke-width="1.200"/><path d="M2 2.800l-.6.900M4.200 3.600l-.3 1M6.800 3.600l.3 1M9 2.800l.6.900" stroke="#bcbcbc" stroke-width=".6"/></svg>
<div class="t" style="left:15.5px;top:580.78px;font-size:9px;color:#c8c8c8;letter-spacing:-0.239px;">dialSpeedMultiplier</div>
<div class="a" style="left:132.5px;top:584.0799999999999px;width:8.5px;height:3.4px;background:#3fe3b5;border-radius:1.700px"></div>
<div class="t" style="left:144.8px;top:580.78px;font-size:9px;color:#c8c8c8;letter-spacing:-0.231px;">Integer</div>
<svg style="left:210.3px;top:582.28px" width="11" height="6" viewBox="0 0 11 6"><path d="M.5 1.200q5 4 10 0" fill="none" stroke="#d4d4d4" stroke-width="1.200"/><path d="M2 2.800l-.6.900M4.200 3.600l-.3 1M6.800 3.600l.3 1M9 2.800l.6.900" stroke="#bcbcbc" stroke-width=".6"/></svg>
<div class="t" style="left:15.5px;top:597.39px;font-size:9px;color:#c8c8c8;letter-spacing:-0.174px;">dialMultiNormal</div>
<div class="a" style="left:132.5px;top:600.6899999999999px;width:8.5px;height:3.4px;background:#1f5fd6;border-radius:1.700px"></div>
<div class="t" style="left:144.8px;top:597.39px;font-size:9px;color:#c8c8c8;letter-spacing:-0.224px;">Vector 2D</div>
<svg style="left:210.3px;top:598.89px" width="11" height="6" viewBox="0 0 11 6"><path d="M.5 1.200q5 4 10 0" fill="none" stroke="#d4d4d4" stroke-width="1.200"/><path d="M2 2.800l-.6.900M4.200 3.600l-.3 1M6.800 3.600l.3 1M9 2.800l.6.900" stroke="#bcbcbc" stroke-width=".6"/></svg>
<div class="t" style="left:15.5px;top:614.0px;font-size:9px;color:#c8c8c8;letter-spacing:-0.207px;">IndicatorRotationAmounts</div>
<svg style="left:130.8px;top:613.5px" width="11" height="11" viewBox="0 0 11 11"><rect x="0" y="0" width="3" height="3" fill="#46c81e"/><rect x="0" y="4" width="3" height="3" fill="#46c81e"/><rect x="0" y="8" width="3" height="3" fill="#46c81e"/><rect x="4" y="0" width="3" height="3" fill="#46c81e"/><rect x="4" y="4" width="3" height="3" fill="#46c81e"/><rect x="4" y="8" width="3" height="3" fill="#46c81e"/><rect x="8" y="0" width="3" height="3" fill="#46c81e"/><rect x="8" y="4" width="3" height="3" fill="#46c81e"/><rect x="8" y="8" width="3" height="3" fill="#46c81e"/></svg>
<div class="t" style="left:144.8px;top:614.0px;font-size:9px;color:#c8c8c8;letter-spacing:-0.262px;">Float</div>
<svg style="left:210.3px;top:615.5px" width="11" height="6" viewBox="0 0 11 6"><path d="M.5 1.200q5 4 10 0" fill="none" stroke="#d4d4d4" stroke-width="1.200"/><path d="M2 2.800l-.6.900M4.200 3.600l-.3 1M6.800 3.600l.3 1M9 2.800l.6.900" stroke="#bcbcbc" stroke-width=".6"/></svg>
<div class="t" style="left:15.5px;top:630.6099999999999px;font-size:9px;color:#c8c8c8;letter-spacing:-0.145px;">indicatorRotationTemp</div>
<div class="a" style="left:132.5px;top:633.9099999999999px;width:8.5px;height:3.4px;background:#4fd62a;border-radius:1.700px"></div>
<div class="t" style="left:144.8px;top:630.6099999999999px;font-size:9px;color:#c8c8c8;letter-spacing:-0.262px;">Float</div>
<svg style="left:210.3px;top:632.1099999999999px" width="11" height="6" viewBox="0 0 11 6"><path d="M.5 1.200q5 4 10 0" fill="none" stroke="#d4d4d4" stroke-width="1.200"/><path d="M2 2.800l-.6.900M4.200 3.600l-.3 1M6.800 3.600l.3 1M9 2.800l.6.900" stroke="#bcbcbc" stroke-width=".6"/></svg>
<div class="t" style="left:15.5px;top:647.22px;font-size:9px;color:#c8c8c8;letter-spacing:-0.158px;">IndicatorBlockerRotations</div>
<svg style="left:130.8px;top:646.72px" width="11" height="11" viewBox="0 0 11 11"><rect x="0" y="0" width="3" height="3" fill="#46c81e"/><rect x="0" y="4" width="3" height="3" fill="#46c81e"/><rect x="0" y="8" width="3" height="3" fill="#46c81e"/><rect x="4" y="0" width="3" height="3" fill="#46c81e"/><rect x="4" y="4" width="3" height="3" fill="#46c81e"/><rect x="4" y="8" width="3" height="3" fill="#46c81e"/><rect x="8" y="0" width="3" height="3" fill="#46c81e"/><rect x="8" y="4" width="3" height="3" fill="#46c81e"/><rect x="8" y="8" width="3" height="3" fill="#46c81e"/></svg>
<div class="t" style="left:144.8px;top:647.22px;font-size:9px;color:#c8c8c8;letter-spacing:-0.262px;">Float</div>
<svg style="left:210.3px;top:648.72px" width="11" height="6" viewBox="0 0 11 6"><path d="M.5 1.200q5 4 10 0" fill="none" stroke="#d4d4d4" stroke-width="1.200"/><path d="M2 2.800l-.6.900M4.200 3.600l-.3 1M6.800 3.600l.3 1M9 2.800l.6.900" stroke="#bcbcbc" stroke-width=".6"/></svg>
<div class="a" style="left:3px;top:662px;width:220.6px;height:17.799999999999955px;background:#2f2f2f;"></div>
<div class="t" style="left:15.3px;top:666.8px;font-size:7.5px;color:#dedede;letter-spacing:-0.496px;font-weight:bold">EVENT DISPATCHERS</div>
<svg style="left:207.2px;top:665.5px" width="11" height="11" viewBox="0 0 11 11"><circle cx="5.500" cy="5.500" r="4.700" fill="none" stroke="#d8d8d8" stroke-width="1"/><path d="M5.500 3.300v4.400M3.300 5.500h4.400" stroke="#e0e0e0" stroke-width="1.200"/></svg>
<div class="a" style="left:227px;top:66px;width:870px;height:18px;background:#151515;"></div>
<svg style="left:230px;top:71.800px" width="11" height="8" viewBox="0 0 11 8"><rect x="0" y="0" width="4" height="3.300" fill="#8c8c8c"/><rect x="5" y="0" width="5.500" height="3.300" fill="#c8c8c8"/><rect x="0" y="4.300" width="4" height="3.300" fill="#8c8c8c"/><rect x="5" y="4.300" width="5.500" height="3.300" fill="#8c8c8c"/></svg>
<div class="t" style="left:244.75px;top:71px;font-size:9px;color:#c4c4c4;letter-spacing:-0.075px;">Viewport</div>
<svg style="left:339px;top:70.500px" width="8" height="11" viewBox="0 0 8 11" fill="none" stroke="#c8c8c8"><path d="M.8 9.800Q2.500 10.400 3 8.200L4.300 3Q4.900 .8 7 1.400" stroke-width="1.100"/><path d="M2 4.600H6.300" stroke-width="1"/></svg>
<div class="t" style="left:352.5px;top:71px;font-size:9px;color:#c4c4c4;letter-spacing:-0.199px;">Construction Scr...</div>
<div class="a" style="left:442.7px;top:68.5px;width:106.7px;height:15.5px;background:#242424;border-radius:3px 3px 0 0"></div>
<div class="a" style="left:444px;top:68.3px;width:104px;height:1.2px;background:linear-gradient(90deg,rgba(40,110,190,0),#2a6cb4 18%,#2a6cb4 65%,rgba(40,110,190,0));"></div>
<svg style="left:446.5px;top:71.3px" width="9.5" height="9.5" viewBox="0 0 10 10"><rect x="0" y="0.300" width="3.900" height="3.700" rx=".7" fill="#d0d0d0"/><rect x="6.300" y="1" width="3.400" height="2.500" rx=".6" fill="#d0d0d0"/><rect x=".4" y="6.700" width="3.200" height="2.600" rx=".6" fill="#d0d0d0"/><rect x="6.300" y="6.100" width="3.400" height="2.600" rx=".6" fill="#d0d0d0"/><path d="M3.700 2.200h2.600M2.800 3.800l3.700 3.200" stroke="#d0d0d0" stroke-width=".9"/></svg>
<div class="t" style="left:460.6px;top:71px;font-size:9px;color:#e4e4e4;letter-spacing:-0.330px;">Event Graph</div>
<svg style="left:534.3px;top:73px" width="6" height="6" viewBox="0 0 6 6"><path d="M.6.600l4.800 4.800M5.400.6L.6 5.400" stroke="#d4d4d4" stroke-width="1.200"/></svg>
<div class="a" style="left:1097px;top:66px;width:183px;height:18px;background:#151515;"></div>
<div class="a" style="left:1100.3px;top:68.5px;width:105.7px;height:15.5px;background:#242424;border-radius:3px 3px 0 0"></div>
<svg style="left:1103px;top:70.5px" width="10.5" height="10.5" viewBox="0 0 13 13"><path d="M1.500 1.500h5M1.500 4h3M5 11.500h7.500M7.500 9h5" stroke="#6e6e6e" stroke-width=".9"/><path d="M9.800.8l2.200 2.200-7.200 7.200-2.200-2.200z" fill="#d0d0d0"/><path d="M2 8.800l2 2-3.200 1.200z" fill="#d0d0d0"/></svg>
<div class="t" style="left:1118px;top:71px;font-size:9px;color:#d4d4d4;letter-spacing:-0.216px;">Details</div>
<svg style="left:1191.7px;top:73px" width="6" height="6" viewBox="0 0 6 6"><path d="M.6.600l4.800 4.800M5.400.6L.6 5.400" stroke="#d4d4d4" stroke-width="1.200"/></svg>
<div class="a" style="left:1100.3px;top:84px;width:177px;height:636px;background:#242424;"></div>
<div class="a" style="left:227px;top:677px;width:870px;height:43px;background:#151515;"></div>
<div class="a" style="left:228.5px;top:696.8px;width:868px;height:23.2px;background:#1a1a1a;"></div>
<div class="a" style="left:228.5px;top:681.5px;width:104.5px;height:15.5px;background:#242424;border-radius:3px 3px 0 0"></div>
<svg style="left:231.500px;top:684px" width="9" height="10" viewBox="0 0 9 10"><path d="M0 0h2v1.300h1.500V0h2v1.300H7V0h2v10H0z" fill="#d0d0d0"/><path d="M2 4l2.200 1.800L2 7.600M4.800 8h2.400" stroke="#242424" stroke-width="1" fill="none"/></svg>
<div class="t" style="left:244.6px;top:684px;font-size:9px;color:#c8c8c8;letter-spacing:-0.251px;">Compiler Results</div>
<svg style="left:318.3px;top:686px" width="6" height="6" viewBox="0 0 6 6"><path d="M.6.600l4.800 4.800M5.400.6L.6 5.400" stroke="#d4d4d4" stroke-width="1.200"/></svg>
<div class="a" style="left:1037.3px;top:712px;width:48.7px;height:9px;background:#323232;border-radius:2px 2px 0 0"></div>
<div class="t" style="left:1048.7px;top:713.7px;font-size:8.5px;color:#a4a4a4;letter-spacing:-0.795px;font-weight:bold">CLEAR</div>
<div id="graph">
<svg style="left:0;top:0" width="869" height="593">
<defs>
<pattern id="gm" x="22.30" y="62.00" width="9.5875" height="9.205" patternUnits="userSpaceOnUse"><path d="M0 .5H9.5875M.5 0V9.205" stroke="#353535" stroke-width=".9"/></pattern>
<pattern id="gM" x="22.30" y="62.00" width="76.7" height="73.64" patternUnits="userSpaceOnUse"><path d="M0 .5H76.7M.5 0V73.64" stroke="#1c1c1c" stroke-width="1"/></pattern>
</defs>
<rect width="100%" height="100%" fill="#262626"/>
<rect width="100%" height="100%" fill="url(#gm)"/>
<rect width="100%" height="100%" fill="url(#gM)"/>
<path d="M252.4 0V593M0 135.6H869M0 356.5H869" stroke="#0e0e0e" stroke-width="1.2"/>
</svg>
<div class="cm" style="left:394.2px;top:35.5px;width:196.0px;height:101.9px;background-position:2.01px 8.09px"><i></i><u style="letter-spacing:-0.52px;opacity:0.8">Open Vault Door if all dials are correct</u></div>
<div class="cm" style="left:394.2px;top:138.8px;width:227.6px;height:68.4px;background-position:2.01px 6.04px"><i></i><u style="letter-spacing:-0.60px;opacity:0.8">Close Vault Door (reset all dials)</u></div>
<div class="cm" style="left:104.1px;top:163.7px;width:132.2px;height:47.1px;background-position:4.49px 8.76px"><i></i><u style="letter-spacing:-0.35px;opacity:0.3">Set Dial rotation limits</u></div>
<div class="cm" style="left:219.2px;top:260.9px;width:167.5px;height:38.5px;background-position:4.44px 3.61px"><i></i><u style="letter-spacing:-0.57px;opacity:0.35">Rotate dial left / get current target</u></div>
<div class="cm" style="left:219.2px;top:302.2px;width:155.8px;height:47.8px;background-position:4.44px 8.33px"><i></i><u style="letter-spacing:-0.58px;opacity:0.35">Rotate dial right / get current target</u></div>
<div class="cm" style="left:397.1px;top:238px;width:107.4px;height:86.3px;background-position:8.70px 8.10px"><i></i><u style="letter-spacing:-0.12px;opacity:0.35">Check dial target</u></div>
<div class="cm" style="left:387.1px;top:325px;width:154.0px;height:74.8px;background-position:9.11px 3.94px"><i></i><u style="letter-spacing:-0.76px;opacity:0.5">Is Dial</u></div>
<div class="cm" style="left:542.5px;top:331.9px;width:112.5px;height:43.0px;background-position:7.11px 6.25px"><i></i><u style="letter-spacing:-0.69px;opacity:0.45">Check if Unlocked</u></div>
<div class="cm" style="left:70.0px;top:378px;width:158.5px;height:119.0px;background-position:0.24px 6.17px"><i></i><u style="letter-spacing:0.42px;opacity:0.9">get input from &quot;Safe type_Simon&quot;</u></div>
<div class="cm" style="left:379.4px;top:401px;width:388.2px;height:88.6px;background-position:7.23px 1.58px"><i></i><u style="letter-spacing:-0.86px;opacity:0.5">Rotate</u></div>
<div class="cm" style="left:458.5px;top:490.5px;width:107.9px;height:49.9px;background-position:4.83px 4.13px"><i></i><u style="letter-spacing:-0.08px;opacity:0.8">Clamp_Dial_rotation</u></div>
<div class="cm" style="left:470.6px;top:541px;width:92.2px;height:34.0px;background-position:2.31px 8.86px"><i></i><u style="letter-spacing:-0.49px;opacity:0.45">Play Sound Once</u></div>
<svg style="left:0;top:0" width="869" height="593" fill="none" stroke-linecap="round"><g transform="translate(-227.5 -84)">
<g stroke="#d8d8d8" stroke-opacity=".21" stroke-width="1.25">
<path d="M628 137C560 138 532 230 522 330S505 357 511 357"/>
<path d="M556.6 303C600 303 590 242 653 240"/>
<path d="M622 262C590 265 575 290 557 301"/>
<path d="M556.6 308C575 310 577 330 576 346S565 360 571.5 360"/>
<path d="M454 283C468 283 470 278 482.5 278"/>
<path d="M454 287C490 290 510 303 540.4 304"/>
<path d="M503 272L509 270.5"/>
<path d="M542 312C538 325 532 335 531 345S536 357 540 357"/>
<path d="M494 433C485 455 470 475 456 491"/>
<path d="M511 433C508 450 500 470 470 500S460 505 456 506"/>
<path d="M601 433C590 450 560 455 547 457S480 478 456 484"/>
<path d="M530 433C540 450 560 470 566 498"/>
<path d="M551 455C548 475 552 490 566 497"/>
<path d="M520 433C525 460 500 500 456 514"/>
<path d="M456 520C500 520 530 512 566 505"/>
<path d="M456 526C500 524 530 520 566 512"/>
<path d="M456 531C500 530 530 526 566 519"/>
<path d="M456 537C500 535 535 530 566 526"/>
<path d="M456 545C500 540 540 535 566 533"/>
<path d="M456 552C480 548 520 470 545 457S590 440 606 452"/>
<path d="M585.7 505C595 505 600 515 609.7 517"/>
<path d="M585.7 512C595 512 600 545 609.7 547"/>
<path d="M585.7 519C600 519 615 500 640 478S660 470 659 468"/>
<path d="M585.7 526C600 530 620 560 660 575S680 588 695 592"/>
<path d="M585.7 498C600 495 610 470 614 450S620 430 623.6 428"/>
<path d="M391 478C420 478 440 468 456 466"/>
<path d="M391 492C420 492 440 520 456 520"/>
<path d="M391 506C420 506 440 526 456 526"/>
<path d="M391 520C420 520 440 531 456 531"/>
<path d="M391 534C420 534 440 537 456 537"/>
<path d="M391 548C420 548 440 545 456 545"/>
<path d="M391 562C420 562 440 553 456 552"/>
<path d="M441.5 478C450 478 452 470 456 468"/>
<path d="M441.5 494C450 494 452 500 456 502"/>
<path d="M332 492C340 492 340 479 348 479"/>
<path d="M369 480C372 480 372 478 375 478"/>
<path d="M732 358C748 358 748 372 735 380S700 400 690 409S670 425 686 427"/>
<path d="M712.8 340C722 340 726 338 732 335"/>
<path d="M682 354C688 354 688 354 693.3 354"/>
<path d="M675 343C690 343 690 338 696 338"/>
<path d="M732 434C750 434 760 440 779 430"/>
<path d="M664.6 430C675 430 678 426 686 426"/>
<path d="M702.9 426C708 426 708 431 712.2 431"/>
<path d="M635.6 428C640 428 642 430 647.4 430"/>
<path d="M642 512C650 512 652 514 662 514"/>
<path d="M677 514C700 514 710 514 736 514"/>
<path d="M759 515C770 515 775 519 787 519"/>
<path d="M806.6 519C815 519 815 533 823 533"/>
<path d="M857 525C865 525 865 512 874 512"/>
<path d="M857 541C865 541 865 556 874 556"/>
<path d="M892 512C900 512 900 516 907 516"/>
<path d="M929 517C940 517 945 497 957 497"/>
<path d="M953 551C955 551 955 537 957 537"/>
<path d="M642 541C650 541 652 541 659.5 541"/>
<path d="M675 541C700 541 710 546 736 546"/>
<path d="M759 547C770 547 775 535 787 535"/>
<path d="M623 518C626 518 626 512 628 512"/>
<path d="M624 548C626 548 626 541 628 541"/>
<path d="M639.7 137C644 137 644 133 648.2 133"/>
<path d="M666.7 133C668 133 668 137 669.6 137"/>
<path d="M689 137C694 137 694 135 698.9 135"/>
<path d="M714.8 135C722 135 722 134 729.8 134"/>
<path d="M768 135C768 135 768 146 765.5 146"/>
<path d="M765.5 160C768 160 764 146 766 146"/>
<path d="M669.6 238C675 238 676 238 681.7 238"/>
<path d="M701.2 238C705 238 706 238 711 238"/>
<path d="M729.5 238C735 238 736 238 741.3 238"/>
<path d="M780.9 238C788 238 790 238 796.9 238"/>
<path d="M525.4 356C532 356 534 358 540.2 358"/>
<path d="M557 358C563 358 565 360 571.5 360"/>
<path d="M520.8 402C527 402 529 404 535.6 404"/>
<path d="M551.8 404C556 404 558 398 564 398"/>
<path d="M738.5 590C744 590 745 589 751.3 589"/>
<path d="M738.5 606C744 606 745 606 751.3 606"/>
<path d="M732.7 648C738 648 740 641 746.1 641"/>
<path d="M606 330C600 300 615 262 640 247S648 240 653 240"/>
</g><g stroke="#5cc83c" stroke-opacity=".32" stroke-width="1.2">
<path d="M582 488C600 480 610 460 614 445S630 430 643 366"/>
<path d="M582 488C600 488 605 500 610 515"/>
<path d="M582 489C620 490 640 520 662 516"/>
<path d="M582 490C615 495 640 545 660 544"/>
<path d="M582 488C640 470 700 500 735 527"/>
<path d="M582 489C610 470 660 470 678.6 475"/>
<path d="M560 364.5C590 364.5 620 366 643 366"/>
<path d="M590.7 362C600 362 605 364 614 364.500"/>
<path d="M582 489C640 489 700 492 740 466S765 449 779 449"/>
<path d="M582 488C600 482 640 476 659.4 469"/>
<path d="M582 488C610 484 660 470 683.2 467"/>
<path d="M582 490C600 500 615 560 640 575S680 600 695 592"/>
<path d="M582 490C598 510 610 590 640 610S690 650 707 648"/>
<path d="M582 490C596 520 620 600 695 608"/>
<path d="M722.6 526C728 526 728 527 734.1 527"/>
<path d="M750.3 537C765 537 770 540 787.2 540"/>
<path d="M909 503C930 503 940 505 957 505"/>
<path d="M894.5 523C920 523 940 510 957 509"/>
<path d="M894.5 546C920 546 940 548 957 548"/>
<path d="M757 527C770 527 775 523 787 523"/>
</g><g stroke="#4ce0b4" stroke-opacity=".45" stroke-width="1">
<path d="M332.2 497.0C343 497.0 337 479 348.1 479"/>
<path d="M332.2 501.2C343 501.2 337 493 348.1 493"/>
<path d="M332.2 505.4C343 505.4 337 507 348.1 507"/>
<path d="M332.2 509.6C343 509.6 337 521 348.1 521"/>
<path d="M332.2 513.8C343 513.8 337 534 348.1 534"/>
<path d="M332.2 518.0C343 518.0 337 548 348.1 548"/>
<path d="M332.2 522.2C343 522.2 337 562 348.1 562"/>
<path d="M339 543C346 543 344 520 341 505"/>
</g><g stroke="#3c9cf0" stroke-opacity=".32" stroke-width=".9">
<path d="M667.6 158C671 158 671 147.500 674.5 147.500H718C724 147.500 724 139 729.8 139"/>
<path d="M667.6 158C671 158 671 171 674.5 171H718C724 171 724 164 729.8 164"/>
<path d="M662.8 388.5C680 388.5 640 360 643.3 359"/>
<path d="M552.4 395C558 395 558 403 564 403"/>
</g><g fill="#38b8f4" stroke="none"><circle cx="674.5" cy="147.5" r="1.2"/><circle cx="718" cy="147.5" r="1.2"/><circle cx="674.5" cy="171" r="1.2"/><circle cx="718" cy="171" r="1.2"/></g></g></svg>
<div class="n" style="left:401.4px;top:43.7px;width:10.8px;height:18.4px"><div class="h" style="height:3.5px;background:linear-gradient(90deg,#a31d1d 0,#a31d1de0 35%,#a31d1d30 92%,#a31d1d10 100%)"></div><b style="position:absolute;left:1.3px;top:0.9px;width:5.9px;height:1.1px;background:rgba(255,255,255,.62)"></b><i class="p" style="right:1.7px;top:12.7px;background:#f2f2f2"></i></div>
<div class="n" style="left:420.7px;top:44px;width:18.5px;height:18.0px"><div class="h" style="height:3.3px;background:linear-gradient(90deg,#9a9a9a 0,#9a9a9ae0 35%,#9a9a9a30 92%,#9a9a9a10 100%)"></div><b style="position:absolute;left:2.2px;top:0.9px;width:10.2px;height:1.1px;background:rgba(255,255,255,.62)"></b><i class="p" style="left:1.7px;top:4.7px;background:#f2f2f2"></i><i class="p" style="right:1.7px;top:4.7px;background:#f2f2f2"></i><i class="p" style="right:1.7px;top:8.6px;background:#f2f2f2"></i></div>
<div class="g" style="left:442.1px;top:49.2px;width:19.4px;height:10.7px"><div class="h" style="background:linear-gradient(90deg,#a31d1d,#a31d1d40);height:2px;opacity:.85"></div><i class="p" style="left:1.7px;top:3.4px;background:#f2f2f2"></i><i class="p" style="left:1.7px;top:7.3px;background:#a01818"></i><i class="p" style="right:1.7px;top:3.4px;background:#f2f2f2"></i><i class="p" style="right:1.7px;top:7.3px;background:#a01818"></i></div>
<div class="n" style="left:471.4px;top:46.6px;width:15.9px;height:13.8px"><div class="h" style="height:3.3px;background:linear-gradient(90deg,#9a9a9a 0,#9a9a9ae0 35%,#9a9a9a30 92%,#9a9a9a10 100%)"></div><b style="position:absolute;left:1.9px;top:0.9px;width:8.7px;height:1.1px;background:rgba(255,255,255,.62)"></b><i class="p" style="left:1.7px;top:4.7px;background:#f2f2f2"></i><i class="p" style="left:1.7px;top:8.6px;background:#a01818"></i><i class="p" style="right:1.7px;top:4.7px;background:#f2f2f2"></i><i class="p" style="right:1.7px;top:8.6px;background:#f2f2f2"></i></div>
<div class="n" style="left:502.3px;top:44px;width:38.3px;height:22.7px"><div class="h" style="height:5.8px;background:linear-gradient(90deg,#37729e 0,#37729ee0 35%,#37729e30 92%,#37729e10 100%)"></div><b style="position:absolute;left:2.2px;top:1.1px;width:20.0px;height:1.1px;background:rgba(255,255,255,.62)"></b><b style="position:absolute;left:1.5px;top:3.6px;width:29.9px;height:1px;background:rgba(200,220,235,.28)"></b><i class="p" style="left:1.7px;top:7.2px;background:#f2f2f2"></i><i class="p" style="left:1.7px;top:11.1px;background:#2c9cf0"></i><i class="p" style="left:1.7px;top:15.0px;background:#f2f2f2"></i><i class="p" style="right:1.7px;top:7.2px;background:#f2f2f2"></i><i class="p" style="left:18.4px;bottom:1px;width:1.600px;height:1.600px;background:#ddd"></i></div>
<div class="n" style="left:502.3px;top:69px;width:35.7px;height:23.2px"><div class="h" style="height:5.8px;background:linear-gradient(90deg,#37729e 0,#37729ee0 35%,#37729e30 92%,#37729e10 100%)"></div><b style="position:absolute;left:2.2px;top:1.1px;width:19.6px;height:1.1px;background:rgba(255,255,255,.62)"></b><b style="position:absolute;left:1.5px;top:3.6px;width:27.8px;height:1px;background:rgba(200,220,235,.28)"></b><i class="p" style="left:1.7px;top:7.2px;background:#f2f2f2"></i><i class="p" style="left:1.7px;top:11.1px;background:#2c9cf0"></i><i class="p" style="left:1.7px;top:15.0px;background:#f2f2f2"></i><i class="p" style="right:1.7px;top:7.2px;background:#f2f2f2"></i><i class="p" style="left:17.1px;bottom:1px;width:1.600px;height:1.600px;background:#ddd"></i></div>
<div class="n" style="left:538.0px;top:56px;width:39.2px;height:37.9px"><div class="h" style="height:5.8px;background:linear-gradient(90deg,#37729e 0,#37729ee0 35%,#37729e30 92%,#37729e10 100%)"></div><b style="position:absolute;left:2.2px;top:1.1px;width:20.0px;height:1.1px;background:rgba(255,255,255,.62)"></b><b style="position:absolute;left:1.5px;top:3.6px;width:30.6px;height:1px;background:rgba(200,220,235,.28)"></b><i class="p" style="left:1.7px;top:7.2px;background:#f2f2f2"></i><i class="p" style="left:1.7px;top:11.1px;background:#2c9cf0"></i><i class="p" style="left:1.7px;top:15.0px;background:#5ad62c"></i><i class="p" style="left:1.7px;top:18.9px;background:#5ad62c"></i><i class="p" style="right:1.7px;top:7.2px;background:#f2f2f2"></i><i class="p" style="left:18.8px;bottom:1px;width:1.600px;height:1.600px;background:#ddd"></i></div>
<div class="g" style="left:420.7px;top:71.5px;width:19.4px;height:5.7px;border-radius:2.8px;background:linear-gradient(#37729e 0,#37729ed0 22%,#4c504e 62%,#404341 100%)"><i class="p" style="right:2.2px;top:1.9px;background:#34b4f4"></i></div>
<div class="n" style="left:444.7px;top:67.3px;width:38.8px;height:15.1px"><div class="h" style="height:5.8px;background:linear-gradient(90deg,#4a7a3e 0,#4a7a3ee0 35%,#4a7a3e30 92%,#4a7a3e10 100%)"></div><b style="position:absolute;left:2.2px;top:1.1px;width:20.0px;height:1.1px;background:rgba(255,255,255,.62)"></b><b style="position:absolute;left:1.5px;top:3.6px;width:30.3px;height:1px;background:rgba(200,220,235,.28)"></b><i class="p" style="left:1.7px;top:7.2px;background:#2c9cf0"></i><i class="p" style="left:1.7px;top:11.1px;background:#f06ab0"></i><i class="p" style="right:1.7px;top:7.2px;background:#f2f2f2"></i></div>
<div class="g" style="left:425.5px;top:99.9px;width:22.0px;height:9.8px"><i class="p" style="left:1.7px;top:3.4px;background:#7a7a7a"></i><i class="p" style="left:1.7px;top:7.3px;background:#7a7a7a"></i><i class="p" style="right:1.7px;top:3.4px;background:#7a7a7a"></i></div>
<div class="g" style="left:425.5px;top:119.7px;width:19.7px;height:6.0px;border-radius:3.0px;background:linear-gradient(#4f963a 0,#4f963ad0 22%,#4c504e 62%,#404341 100%)"><i class="p" style="right:2.2px;top:2.1px;background:#7cf04c"></i></div>
<div class="n" style="left:451.8px;top:92.2px;width:23.5px;height:16.6px"><div class="h" style="height:5.8px;background:linear-gradient(90deg,#4a7a3e 0,#4a7a3ee0 35%,#4a7a3e30 92%,#4a7a3e10 100%)"></div><b style="position:absolute;left:2.2px;top:1.1px;width:12.9px;height:1.1px;background:rgba(255,255,255,.62)"></b><b style="position:absolute;left:1.5px;top:3.6px;width:18.3px;height:1px;background:rgba(200,220,235,.28)"></b><i class="p" style="left:1.7px;top:7.2px;background:#5ad62c"></i><i class="p" style="left:1.7px;top:10.8px;background:#5ad62c"></i><i class="p" style="left:1.7px;top:14.4px;background:#5ad62c"></i><i class="p" style="right:1.7px;top:7.2px;background:#f2f2f2"></i></div>
<div class="n" style="left:451.8px;top:112.8px;width:23.5px;height:16.8px"><div class="h" style="height:5.8px;background:linear-gradient(90deg,#4a7a3e 0,#4a7a3ee0 35%,#4a7a3e30 92%,#4a7a3e10 100%)"></div><b style="position:absolute;left:2.2px;top:1.1px;width:12.9px;height:1.1px;background:rgba(255,255,255,.62)"></b><b style="position:absolute;left:1.5px;top:3.6px;width:18.3px;height:1px;background:rgba(200,220,235,.28)"></b><i class="p" style="left:1.7px;top:7.2px;background:#5ad62c"></i><i class="p" style="left:1.7px;top:10.9px;background:#5ad62c"></i><i class="p" style="left:1.7px;top:14.6px;background:#5ad62c"></i><i class="p" style="right:1.7px;top:7.2px;background:#f2f2f2"></i></div>
<div class="n" style="left:502.3px;top:94.8px;width:23.2px;height:16.6px"><div class="h" style="height:5.8px;background:linear-gradient(90deg,#4a7a3e 0,#4a7a3ee0 35%,#4a7a3e30 92%,#4a7a3e10 100%)"></div><b style="position:absolute;left:2.2px;top:1.1px;width:12.8px;height:1.1px;background:rgba(255,255,255,.62)"></b><b style="position:absolute;left:1.5px;top:3.6px;width:18.1px;height:1px;background:rgba(200,220,235,.28)"></b><i class="p" style="left:1.7px;top:7.2px;background:#f2f2f2"></i><i class="p" style="right:1.7px;top:10.8px;background:#5ad62c"></i><i class="p" style="right:1.7px;top:14.4px;background:#5ad62c"></i></div>
<div class="n" style="left:502.3px;top:112.8px;width:23.2px;height:16.8px"><div class="h" style="height:5.8px;background:linear-gradient(90deg,#4a7a3e 0,#4a7a3ee0 35%,#4a7a3e30 92%,#4a7a3e10 100%)"></div><b style="position:absolute;left:2.2px;top:1.1px;width:12.8px;height:1.1px;background:rgba(255,255,255,.62)"></b><b style="position:absolute;left:1.5px;top:3.6px;width:18.1px;height:1px;background:rgba(200,220,235,.28)"></b><i class="p" style="left:1.7px;top:7.2px;background:#5ad62c"></i><i class="p" style="left:1.7px;top:10.9px;background:#5ad62c"></i><i class="p" style="left:1.7px;top:14.6px;background:#5ad62c"></i><i class="p" style="right:1.7px;top:7.2px;background:#5ad62c"></i></div>
<div class="n" style="left:425.5px;top:150px;width:16.6px;height:13.8px"><div class="h" style="height:3.3px;background:linear-gradient(90deg,#9a9a9a 0,#9a9a9ae0 35%,#9a9a9a30 92%,#9a9a9a10 100%)"></div><b style="position:absolute;left:2.0px;top:0.9px;width:9.1px;height:1.1px;background:rgba(255,255,255,.62)"></b><i class="p" style="left:1.7px;top:4.7px;background:#f2f2f2"></i><i class="p" style="left:1.7px;top:8.6px;background:#a01818"></i><i class="p" style="right:1.7px;top:4.7px;background:#f2f2f2"></i><i class="p" style="right:1.7px;top:8.6px;background:#7a7a7a"></i></div>
<div class="g" style="left:454.2px;top:150px;width:19.5px;height:10.7px"><div class="h" style="background:linear-gradient(90deg,#a31d1d,#a31d1d40);height:2px;opacity:.85"></div><i class="p" style="left:1.7px;top:3.4px;background:#f2f2f2"></i><i class="p" style="left:1.7px;top:7.3px;background:#7a7a7a"></i><i class="p" style="right:1.7px;top:3.4px;background:#f2f2f2"></i></div>
<div class="g" style="left:483.5px;top:150px;width:18.5px;height:10.7px"><div class="h" style="background:linear-gradient(90deg,#3a907a,#3a907a40);height:2px;opacity:.85"></div><i class="p" style="left:1.7px;top:3.4px;background:#f2f2f2"></i><i class="p" style="left:1.7px;top:7.3px;background:#7a7a7a"></i><i class="p" style="right:1.7px;top:3.4px;background:#f2f2f2"></i></div>
<div class="n" style="left:513.8px;top:148px;width:39.6px;height:38.3px"><div class="h" style="height:5.8px;background:linear-gradient(90deg,#37729e 0,#37729ee0 35%,#37729e30 92%,#37729e10 100%)"></div><b style="position:absolute;left:2.2px;top:1.1px;width:20.0px;height:1.1px;background:rgba(255,255,255,.62)"></b><b style="position:absolute;left:1.5px;top:3.6px;width:30.9px;height:1px;background:rgba(200,220,235,.28)"></b><i class="p" style="left:1.7px;top:7.2px;background:#f2f2f2"></i><i class="p" style="left:1.7px;top:11.1px;background:#2c9cf0"></i><i class="p" style="left:1.7px;top:15.0px;background:#5ad62c"></i><i class="p" style="left:1.7px;top:18.9px;background:#5ad62c"></i><i class="p" style="left:1.7px;top:22.8px;background:#5ad62c"></i><i class="p" style="left:1.7px;top:30.6px;background:#a01818"></i><i class="p" style="right:1.7px;top:7.2px;background:#f2f2f2"></i><i class="p" style="left:19.0px;bottom:1px;width:1.600px;height:1.600px;background:#ddd"></i></div>
<div class="n" style="left:569.4px;top:148px;width:39.3px;height:38.3px"><div class="h" style="height:5.8px;background:linear-gradient(90deg,#37729e 0,#37729ee0 35%,#37729e30 92%,#37729e10 100%)"></div><b style="position:absolute;left:2.2px;top:1.1px;width:20.0px;height:1.1px;background:rgba(255,255,255,.62)"></b><b style="position:absolute;left:1.5px;top:3.6px;width:30.7px;height:1px;background:rgba(200,220,235,.28)"></b><i class="p" style="left:1.7px;top:7.2px;background:#f2f2f2"></i><i class="p" style="left:1.7px;top:11.1px;background:#38e0b0"></i><i class="p" style="left:1.7px;top:15.0px;background:#5ad62c"></i><i class="p" style="left:1.7px;top:18.9px;background:#5ad62c"></i><i class="p" style="left:1.7px;top:22.8px;background:#5ad62c"></i><i class="p" style="left:1.7px;top:30.6px;background:#a01818"></i><i class="p" style="right:1.7px;top:7.2px;background:#f2f2f2"></i><i class="p" style="left:18.9px;bottom:1px;width:1.600px;height:1.600px;background:#ddd"></i></div>
<div class="g" style="left:403.5px;top:170px;width:20.0px;height:6.0px;border-radius:3.0px;background:linear-gradient(#8a3434 0,#8a3434d0 22%,#4c504e 62%,#404341 100%)"><i class="p" style="right:2.2px;top:2.1px;background:#b02424"></i></div>
<div class="g" style="left:513.8px;top:196px;width:19.5px;height:5.7px;border-radius:2.8px;background:linear-gradient(#37729e 0,#37729ed0 22%,#4c504e 62%,#404341 100%)"><i class="p" style="right:2.2px;top:1.9px;background:#34b4f4"></i></div>
<div class="g" style="left:569.4px;top:198px;width:19.7px;height:5.7px;border-radius:2.8px;background:linear-gradient(#37729e 0,#37729ed0 22%,#4c504e 62%,#404341 100%)"><i class="p" style="right:2.2px;top:1.9px;background:#34b4f4"></i></div>
<div class="n" style="left:146.9px;top:135.6px;width:25.8px;height:10.8px"><div class="h" style="height:3.5px;background:linear-gradient(90deg,#a31d1d 0,#a31d1de0 35%,#a31d1d30 92%,#a31d1d10 100%)"></div><b style="position:absolute;left:2.2px;top:0.9px;width:14.2px;height:1.1px;background:rgba(255,255,255,.62)"></b><i class="p" style="right:1.7px;top:8.6px;background:#f2f2f2"></i></div>
<div class="n" style="left:173.1px;top:135.6px;width:25.0px;height:20.4px"><div class="h" style="height:5.8px;background:linear-gradient(90deg,#37729e 0,#37729ee0 35%,#37729e30 92%,#37729e10 100%)"></div><b style="position:absolute;left:2.2px;top:1.1px;width:13.8px;height:1.1px;background:rgba(255,255,255,.62)"></b><b style="position:absolute;left:1.5px;top:3.6px;width:19.5px;height:1px;background:rgba(200,220,235,.28)"></b><i class="p" style="left:1.7px;top:7.2px;background:#f2f2f2"></i><i class="p" style="left:1.7px;top:11.1px;background:#2c9cf0"></i><i class="p" style="left:1.7px;top:15.0px;background:#2c9cf0"></i><i class="p" style="right:1.7px;top:7.2px;background:#f2f2f2"></i><i class="p" style="left:11.7px;bottom:1px;width:1.600px;height:1.600px;background:#ddd"></i></div>
<div class="n" style="left:132.5px;top:147px;width:31.0px;height:9.0px"><div class="h" style="height:3.3px;background:linear-gradient(90deg,#4a7a3e 0,#4a7a3ee0 35%,#4a7a3e30 92%,#4a7a3e10 100%)"></div><b style="position:absolute;left:2.2px;top:0.9px;width:17.1px;height:1.1px;background:rgba(255,255,255,.62)"></b><i class="p" style="left:1.7px;top:4.7px;background:#2c9cf0"></i><i class="p" style="right:1.7px;top:4.7px;background:#2c9cf0"></i></div>
<div class="n" style="left:255.0px;top:181.3px;width:20.7px;height:14.4px"><div class="h" style="height:3.5px;background:linear-gradient(90deg,#a31d1d 0,#a31d1de0 35%,#a31d1d30 92%,#a31d1d10 100%)"></div><b style="position:absolute;left:2.2px;top:0.9px;width:11.4px;height:1.1px;background:rgba(255,255,255,.62)"></b><i class="p" style="right:1.7px;top:4.9px;background:#f2f2f2"></i><i class="p" style="right:1.7px;top:8.8px;background:#7a7a7a"></i></div>
<div class="n" style="left:312.9px;top:214.8px;width:16.2px;height:13.9px"><div class="h" style="height:3.3px;background:linear-gradient(90deg,#9a9a9a 0,#9a9a9ae0 35%,#9a9a9a30 92%,#9a9a9a10 100%)"></div><b style="position:absolute;left:1.9px;top:0.9px;width:8.9px;height:1.1px;background:rgba(255,255,255,.62)"></b><i class="p" style="left:1.7px;top:4.7px;background:#f2f2f2"></i><i class="p" style="left:1.7px;top:8.6px;background:#a01818"></i><i class="p" style="right:1.7px;top:4.7px;background:#f2f2f2"></i><i class="p" style="right:1.7px;top:8.6px;background:#f2f2f2"></i></div>
<div class="g" style="left:288.9px;top:223.2px;width:19.3px;height:6.1px;border-radius:3.1px;background:linear-gradient(#8a3434 0,#8a3434d0 22%,#4c504e 62%,#404341 100%)"><i class="p" style="right:2.2px;top:2.2px;background:#b02424"></i></div>
<div class="n" style="left:113.2px;top:172.8px;width:31.1px;height:8.7px"><div class="h" style="height:3.3px;background:linear-gradient(90deg,#4a7a3e 0,#4a7a3ee0 35%,#4a7a3e30 92%,#4a7a3e10 100%)"></div><b style="position:absolute;left:2.2px;top:0.9px;width:17.1px;height:1.1px;background:rgba(255,255,255,.62)"></b><i class="p" style="left:1.7px;top:4.7px;background:#2c9cf0"></i><i class="p" style="right:1.7px;top:4.7px;background:#2c9cf0"></i></div>
<div class="n" style="left:120.3px;top:182px;width:29.1px;height:11.5px"><div class="h" style="height:3.3px;background:linear-gradient(90deg,#4a7a3e 0,#4a7a3ee0 35%,#4a7a3e30 92%,#4a7a3e10 100%)"></div><b style="position:absolute;left:2.2px;top:0.9px;width:16.0px;height:1.1px;background:rgba(255,255,255,.62)"></b><i class="p" style="left:1.7px;top:8.6px;background:#2c9cf0"></i><i class="p" style="right:1.7px;top:8.6px;background:#f0c030"></i></div>
<div class="n" style="left:115.9px;top:193.7px;width:28.4px;height:11.2px"><div class="h" style="height:3.3px;background:linear-gradient(90deg,#4a7a3e 0,#4a7a3ee0 35%,#4a7a3e30 92%,#4a7a3e10 100%)"></div><b style="position:absolute;left:2.2px;top:0.9px;width:15.6px;height:1.1px;background:rgba(255,255,255,.62)"></b><i class="p" style="left:1.7px;top:8.6px;background:#2c9cf0"></i><i class="p" style="right:1.7px;top:8.6px;background:#f0c030"></i></div>
<div class="g" style="left:153.8px;top:189.7px;width:22.0px;height:9.9px"><i class="p" style="left:1.7px;top:3.4px;background:#f0c030"></i><i class="p" style="left:1.7px;top:7.3px;background:#f0c030"></i><i class="p" style="right:1.7px;top:3.4px;background:#7a7a7a"></i></div>
<div class="n" style="left:175.8px;top:182px;width:24.4px;height:8.5px"><div class="h" style="height:3.3px;background:linear-gradient(90deg,#4a7a3e 0,#4a7a3ee0 35%,#4a7a3e30 92%,#4a7a3e10 100%)"></div><b style="position:absolute;left:2.2px;top:0.9px;width:13.4px;height:1.1px;background:rgba(255,255,255,.62)"></b><i class="p" style="left:1.7px;top:4.7px;background:#5ad62c"></i><i class="p" style="right:1.7px;top:4.7px;background:#5ad62c"></i></div>
<div class="g" style="left:176.2px;top:192.5px;width:19.9px;height:10.8px"><i class="p" style="left:1.7px;top:3.4px;background:#f0c030"></i><i class="p" style="left:1.7px;top:7.3px;background:#7a7a7a"></i><i class="p" style="right:1.7px;top:3.4px;background:#a01818"></i></div>
<div class="n" style="left:209.7px;top:196.2px;width:16.8px;height:13.6px"><div class="h" style="height:3.3px;background:linear-gradient(90deg,#9a9a9a 0,#9a9a9ae0 35%,#9a9a9a30 92%,#9a9a9a10 100%)"></div><b style="position:absolute;left:2.0px;top:0.9px;width:9.2px;height:1.1px;background:rgba(255,255,255,.62)"></b><i class="p" style="left:1.7px;top:4.7px;background:#f2f2f2"></i><i class="p" style="left:1.7px;top:8.6px;background:#a01818"></i><i class="p" style="right:1.7px;top:4.7px;background:#f2f2f2"></i><i class="p" style="right:1.7px;top:8.6px;background:#7a7a7a"></i></div>
<div class="g" style="left:221.5px;top:276.2px;width:19.5px;height:5.8px;border-radius:2.9px;background:linear-gradient(#4f963a 0,#4f963ad0 22%,#4c504e 62%,#404341 100%)"><i class="p" style="right:2.2px;top:2.0px;background:#7cf04c"></i></div>
<div class="g" style="left:243.3px;top:274.7px;width:31.9px;height:10.7px"><div class="h" style="background:linear-gradient(90deg,#4f963a,#4f963a40);height:2px;opacity:.85"></div><i class="p" style="left:1.7px;top:3.4px;background:#5ad62c"></i><i class="p" style="right:1.7px;top:3.4px;background:#38e0b0"></i><b style="position:absolute;left:10.9px;top:4.1px;width:10px;height:2.600px;background:rgba(200,235,180,.5);border-radius:1px"></b></div>
<div class="g" style="left:245.2px;top:285.8px;width:20.1px;height:5.2px;border-radius:2.6px;background:linear-gradient(#4f963a 0,#4f963ad0 22%,#4c504e 62%,#404341 100%)"><i class="p" style="right:2.2px;top:1.7px;background:#7cf04c"></i></div>
<div class="n" style="left:283.8px;top:267.5px;width:14.1px;height:17.4px"><div class="h" style="height:3.3px;background:linear-gradient(90deg,#9a9a9a 0,#9a9a9ae0 35%,#9a9a9a30 92%,#9a9a9a10 100%)"></div><b style="position:absolute;left:1.7px;top:0.9px;width:7.8px;height:1.1px;background:rgba(255,255,255,.62)"></b><i class="p" style="left:1.7px;top:4.7px;background:#f2f2f2"></i><i class="p" style="left:1.7px;top:8.6px;background:#38e0b0"></i><i class="p" style="left:1.7px;top:12.5px;background:#f2f2f2"></i><i class="p" style="right:1.7px;top:4.7px;background:#f2f2f2"></i><i class="p" style="right:1.7px;top:8.6px;background:#38e0b0"></i></div>
<div class="g" style="left:285.9px;top:288.4px;width:20.4px;height:9.2px"><i class="p" style="left:1.7px;top:3.4px;background:#38e0b0"></i><i class="p" style="left:1.7px;top:7.0px;background:#38e0b0"></i><i class="p" style="right:1.7px;top:3.4px;background:#7a7a7a"></i></div>
<div class="n" style="left:312.7px;top:269.6px;width:16.8px;height:13.8px"><div class="h" style="height:3.3px;background:linear-gradient(90deg,#9a9a9a 0,#9a9a9ae0 35%,#9a9a9a30 92%,#9a9a9a10 100%)"></div><b style="position:absolute;left:2.0px;top:0.9px;width:9.2px;height:1.1px;background:rgba(255,255,255,.62)"></b><i class="p" style="left:1.7px;top:4.7px;background:#f2f2f2"></i><i class="p" style="left:1.7px;top:8.6px;background:#a01818"></i><i class="p" style="right:1.7px;top:4.7px;background:#f2f2f2"></i><i class="p" style="right:1.7px;top:8.6px;background:#7a7a7a"></i></div>
<div class="g" style="left:315.0px;top:284.9px;width:23.3px;height:9.9px"><i class="p" style="left:1.7px;top:3.4px;background:#5ad62c"></i><i class="p" style="left:1.7px;top:7.3px;background:#38e0b0"></i><i class="p" style="right:1.7px;top:3.4px;background:#5ad62c"></i><b style="position:absolute;left:8.6px;top:3.8px;width:6px;height:2.600px;background:rgba(235,235,235,.5);border-radius:1px"></b></div>
<div class="g" style="left:344.0px;top:272.4px;width:19.2px;height:10.2px"><div class="h" style="background:linear-gradient(90deg,#4f963a,#4f963a40);height:2px;opacity:.85"></div><i class="p" style="left:1.7px;top:3.4px;background:#f2f2f2"></i><i class="p" style="left:1.7px;top:7.3px;background:#5ad62c"></i><i class="p" style="right:1.7px;top:3.4px;background:#f2f2f2"></i><i class="p" style="right:1.7px;top:7.3px;background:#5ad62c"></i></div>
<div class="g" style="left:351.3px;top:285px;width:22.2px;height:8.8px"><i class="p" style="left:1.7px;top:3.4px;background:#5ad62c"></i><i class="p" style="left:1.7px;top:6.6px;background:#5ad62c"></i><i class="p" style="right:1.7px;top:3.4px;background:#7a7a7a"></i></div>
<div class="g" style="left:221.5px;top:322px;width:19.5px;height:5.8px;border-radius:2.9px;background:linear-gradient(#4f963a 0,#4f963ad0 22%,#4c504e 62%,#404341 100%)"><i class="p" style="right:2.2px;top:2.0px;background:#7cf04c"></i></div>
<div class="g" style="left:243.3px;top:320.5px;width:31.9px;height:11.0px"><div class="h" style="background:linear-gradient(90deg,#4f963a,#4f963a40);height:2px;opacity:.85"></div><i class="p" style="left:1.7px;top:3.4px;background:#5ad62c"></i><i class="p" style="right:1.7px;top:3.4px;background:#38e0b0"></i><b style="position:absolute;left:10.9px;top:4.3px;width:10px;height:2.600px;background:rgba(200,235,180,.5);border-radius:1px"></b></div>
<div class="g" style="left:243.3px;top:332px;width:19.0px;height:5.0px;border-radius:2.5px;background:linear-gradient(#4f963a 0,#4f963ad0 22%,#4c504e 62%,#404341 100%)"><i class="p" style="right:2.2px;top:1.6px;background:#7cf04c"></i></div>
<div class="n" style="left:279.1px;top:313.2px;width:14.2px;height:17.7px"><div class="h" style="height:3.3px;background:linear-gradient(90deg,#9a9a9a 0,#9a9a9ae0 35%,#9a9a9a30 92%,#9a9a9a10 100%)"></div><b style="position:absolute;left:1.7px;top:0.9px;width:7.8px;height:1.1px;background:rgba(255,255,255,.62)"></b><i class="p" style="left:1.7px;top:4.7px;background:#f2f2f2"></i><i class="p" style="left:1.7px;top:8.6px;background:#38e0b0"></i><i class="p" style="left:1.7px;top:12.5px;background:#f2f2f2"></i><i class="p" style="right:1.7px;top:4.7px;background:#f2f2f2"></i><i class="p" style="right:1.7px;top:8.6px;background:#38e0b0"></i></div>
<div class="g" style="left:281.5px;top:334.2px;width:20.2px;height:9.5px"><i class="p" style="left:1.7px;top:3.4px;background:#38e0b0"></i><i class="p" style="left:1.7px;top:7.3px;background:#38e0b0"></i><i class="p" style="right:1.7px;top:3.4px;background:#7a7a7a"></i></div>
<div class="g" style="left:305.5px;top:308.3px;width:19.4px;height:5.7px;border-radius:2.8px;background:linear-gradient(#37729e 0,#37729ed0 22%,#4c504e 62%,#404341 100%)"><i class="p" style="right:2.2px;top:1.9px;background:#34b4f4"></i></div>
<div class="n" style="left:308.1px;top:315.2px;width:16.2px;height:14.0px"><div class="h" style="height:3.3px;background:linear-gradient(90deg,#9a9a9a 0,#9a9a9ae0 35%,#9a9a9a30 92%,#9a9a9a10 100%)"></div><b style="position:absolute;left:1.9px;top:0.9px;width:8.9px;height:1.1px;background:rgba(255,255,255,.62)"></b><i class="p" style="left:1.7px;top:4.7px;background:#f2f2f2"></i><i class="p" style="left:1.7px;top:8.6px;background:#a01818"></i><i class="p" style="right:1.7px;top:4.7px;background:#f2f2f2"></i><i class="p" style="right:1.7px;top:8.6px;background:#7a7a7a"></i></div>
<div class="g" style="left:307.8px;top:330.7px;width:23.4px;height:9.7px"><i class="p" style="left:1.7px;top:3.4px;background:#5ad62c"></i><i class="p" style="left:1.7px;top:7.3px;background:#38e0b0"></i><i class="p" style="right:1.7px;top:3.4px;background:#5ad62c"></i><b style="position:absolute;left:8.7px;top:3.6px;width:6px;height:2.600px;background:rgba(235,235,235,.5);border-radius:1px"></b></div>
<div class="n" style="left:336.5px;top:307.8px;width:38.5px;height:31.5px"><div class="h" style="height:5.8px;background:linear-gradient(90deg,#37729e 0,#37729ee0 35%,#37729e30 92%,#37729e10 100%)"></div><b style="position:absolute;left:2.2px;top:1.1px;width:20.0px;height:1.1px;background:rgba(255,255,255,.62)"></b><b style="position:absolute;left:1.5px;top:3.6px;width:30.0px;height:1px;background:rgba(200,220,235,.28)"></b><i class="p" style="left:1.7px;top:7.2px;background:#f2f2f2"></i><i class="p" style="left:1.7px;top:11.1px;background:#2c9cf0"></i><i class="p" style="left:1.7px;top:15.0px;background:#5ad62c"></i><i class="p" style="left:1.7px;top:18.9px;background:#5ad62c"></i><i class="p" style="left:1.7px;top:22.8px;background:#5ad62c"></i><i class="p" style="right:1.7px;top:7.2px;background:#f2f2f2"></i><i class="p" style="left:18.4px;bottom:1px;width:1.600px;height:1.600px;background:#ddd"></i></div>
<div class="g" style="left:405.8px;top:246.5px;width:19.7px;height:5.4px;border-radius:2.7px;background:linear-gradient(#4f963a 0,#4f963ad0 22%,#4c504e 62%,#404341 100%)"><i class="p" style="right:2.2px;top:1.8px;background:#7cf04c"></i></div>
<div class="g" style="left:427.5px;top:246.5px;width:20.0px;height:5.4px;border-radius:2.7px;background:linear-gradient(#3a907a 0,#3a907ad0 22%,#4c504e 62%,#404341 100%)"><i class="p" style="right:2.2px;top:1.8px;background:#4cf0c4"></i></div>
<div class="g" style="left:449.5px;top:247.2px;width:17.4px;height:9.3px"><i class="p" style="left:1.7px;top:3.4px;background:#38e0b0"></i><i class="p" style="left:1.7px;top:7.1px;background:#38e0b0"></i><i class="p" style="right:1.7px;top:3.4px;background:#7a7a7a"></i></div>
<div class="g" style="left:415.8px;top:253.7px;width:32.0px;height:10.7px"><div class="h" style="background:linear-gradient(90deg,#4f963a,#4f963a40);height:2px;opacity:.85"></div><i class="p" style="left:1.7px;top:3.4px;background:#5ad62c"></i><i class="p" style="right:1.7px;top:3.4px;background:#38e0b0"></i><b style="position:absolute;left:11.0px;top:4.1px;width:10px;height:2.600px;background:rgba(200,235,180,.5);border-radius:1px"></b></div>
<div class="n" style="left:468.5px;top:251.3px;width:16.8px;height:13.1px"><div class="h" style="height:3.3px;background:linear-gradient(90deg,#9a9a9a 0,#9a9a9ae0 35%,#9a9a9a30 92%,#9a9a9a10 100%)"></div><b style="position:absolute;left:2.0px;top:0.9px;width:9.2px;height:1.1px;background:rgba(255,255,255,.62)"></b><i class="p" style="left:1.7px;top:4.7px;background:#f2f2f2"></i><i class="p" style="left:1.7px;top:8.6px;background:#a01818"></i><i class="p" style="right:1.7px;top:4.7px;background:#f2f2f2"></i><i class="p" style="right:1.7px;top:8.6px;background:#f2f2f2"></i></div>
<div class="n" style="left:415.8px;top:264.8px;width:38.5px;height:30.8px"><div class="h" style="height:5.8px;background:linear-gradient(90deg,#37729e 0,#37729ee0 35%,#37729e30 92%,#37729e10 100%)"></div><b style="position:absolute;left:2.2px;top:1.1px;width:20.0px;height:1.1px;background:rgba(255,255,255,.62)"></b><b style="position:absolute;left:1.5px;top:3.6px;width:30.0px;height:1px;background:rgba(200,220,235,.28)"></b><i class="p" style="left:1.7px;top:7.2px;background:#f2f2f2"></i><i class="p" style="left:1.7px;top:11.1px;background:#2c9cf0"></i><i class="p" style="left:1.7px;top:15.0px;background:#5ad62c"></i><i class="p" style="left:1.7px;top:18.9px;background:#5ad62c"></i><i class="p" style="left:1.7px;top:22.8px;background:#5ad62c"></i><i class="p" style="right:1.7px;top:7.2px;background:#f2f2f2"></i><i class="p" style="left:18.4px;bottom:1px;width:1.600px;height:1.600px;background:#ddd"></i></div>
<div class="n" style="left:465.8px;top:264.8px;width:38.9px;height:30.8px"><div class="h" style="height:5.8px;background:linear-gradient(90deg,#37729e 0,#37729ee0 35%,#37729e30 92%,#37729e10 100%)"></div><b style="position:absolute;left:2.2px;top:1.1px;width:20.0px;height:1.1px;background:rgba(255,255,255,.62)"></b><b style="position:absolute;left:1.5px;top:3.6px;width:30.3px;height:1px;background:rgba(200,220,235,.28)"></b><i class="p" style="left:1.7px;top:7.2px;background:#f2f2f2"></i><i class="p" style="left:1.7px;top:11.1px;background:#2c9cf0"></i><i class="p" style="left:1.7px;top:15.0px;background:#5ad62c"></i><i class="p" style="left:1.7px;top:18.9px;background:#5ad62c"></i><i class="p" style="left:1.7px;top:22.8px;background:#5ad62c"></i><i class="p" style="right:1.7px;top:7.2px;background:#f2f2f2"></i><i class="p" style="left:18.7px;bottom:1px;width:1.600px;height:1.600px;background:#ddd"></i></div>
<div class="g" style="left:415.8px;top:302px;width:19.5px;height:5.2px;border-radius:2.6px;background:linear-gradient(#37729e 0,#37729ed0 22%,#4c504e 62%,#404341 100%)"><i class="p" style="right:2.2px;top:1.7px;background:#34b4f4"></i></div>
<div class="g" style="left:419.7px;top:308.3px;width:20.0px;height:5.4px;border-radius:2.7px;background:linear-gradient(#3a907a 0,#3a907ad0 22%,#4c504e 62%,#404341 100%)"><i class="p" style="right:2.2px;top:1.8px;background:#4cf0c4"></i></div>
<div class="g" style="left:441.9px;top:306.5px;width:17.3px;height:9.0px"><i class="p" style="left:1.7px;top:3.4px;background:#38e0b0"></i><i class="p" style="left:1.7px;top:6.8px;background:#38e0b0"></i><i class="p" style="right:1.7px;top:3.4px;background:#a01818"></i></div>
<div class="n" style="left:465.8px;top:306.5px;width:16.7px;height:13.2px"><div class="h" style="height:3.3px;background:linear-gradient(90deg,#9a9a9a 0,#9a9a9ae0 35%,#9a9a9a30 92%,#9a9a9a10 100%)"></div><b style="position:absolute;left:2.0px;top:0.9px;width:9.2px;height:1.1px;background:rgba(255,255,255,.62)"></b><i class="p" style="left:1.7px;top:4.7px;background:#f2f2f2"></i><i class="p" style="left:1.7px;top:8.6px;background:#a01818"></i><i class="p" style="right:1.7px;top:4.7px;background:#f2f2f2"></i><i class="p" style="right:1.7px;top:8.6px;background:#7a7a7a"></i></div>
<div class="n" style="left:396.1px;top:336px;width:12.0px;height:17.4px"><div class="h" style="height:3.5px;background:linear-gradient(90deg,#a31d1d 0,#a31d1de0 35%,#a31d1d30 92%,#a31d1d10 100%)"></div><b style="position:absolute;left:1.4px;top:0.9px;width:6.6px;height:1.1px;background:rgba(255,255,255,.62)"></b><i class="p" style="right:1.7px;top:8.8px;background:#f2f2f2"></i></div>
<div class="n" style="left:419.9px;top:342.7px;width:17.2px;height:14.1px"><div class="h" style="height:3.3px;background:linear-gradient(90deg,#9a9a9a 0,#9a9a9ae0 35%,#9a9a9a30 92%,#9a9a9a10 100%)"></div><b style="position:absolute;left:2.1px;top:0.9px;width:9.5px;height:1.1px;background:rgba(255,255,255,.62)"></b><i class="p" style="left:1.7px;top:4.7px;background:#f2f2f2"></i><i class="p" style="left:1.7px;top:8.6px;background:#a01818"></i><i class="p" style="right:1.7px;top:4.7px;background:#f2f2f2"></i><i class="p" style="right:1.7px;top:8.6px;background:#f2f2f2"></i></div>
<div class="g" style="left:395.5px;top:355.6px;width:21.0px;height:8.7px"><i class="p" style="left:1.7px;top:3.4px;background:#5ad62c"></i><i class="p" style="left:1.7px;top:6.5px;background:#5ad62c"></i><i class="p" style="right:1.7px;top:3.4px;background:#7a7a7a"></i></div>
<div class="g" style="left:458.5px;top:338.7px;width:16.9px;height:10.2px"><i class="p" style="left:1.7px;top:3.4px;background:#f2f2f2"></i><i class="p" style="left:1.7px;top:7.3px;background:#38e0b0"></i><i class="p" style="right:1.7px;top:3.4px;background:#f2f2f2"></i></div>
<div class="g" style="left:458.5px;top:350.4px;width:16.0px;height:10.2px"><i class="p" style="left:1.7px;top:3.4px;background:#f2f2f2"></i><i class="p" style="left:1.7px;top:7.3px;background:#38e0b0"></i><i class="p" style="right:1.7px;top:3.4px;background:#f2f2f2"></i><i class="p" style="right:1.7px;top:7.3px;background:#38e0b0"></i></div>
<div class="g" style="left:484.7px;top:343.2px;width:19.7px;height:14.3px"><div class="h" style="background:linear-gradient(90deg,#37729e,#37729e40);height:2px;opacity:.85"></div><i class="p" style="left:1.7px;top:3.4px;background:#f2f2f2"></i><i class="p" style="left:1.7px;top:7.3px;background:#5ad62c"></i><i class="p" style="left:1.7px;top:11.2px;background:#5ad62c"></i><i class="p" style="right:1.7px;top:7.3px;background:#2c9cf0"></i></div>
<div class="g" style="left:431.9px;top:381.7px;width:19.9px;height:5.7px;border-radius:2.8px;background:linear-gradient(#3a907a 0,#3a907ad0 22%,#4c504e 62%,#404341 100%)"><i class="p" style="right:2.2px;top:1.9px;background:#4cf0c4"></i></div>
<div class="g" style="left:455.7px;top:379.9px;width:17.6px;height:5.2px;border-radius:2.6px;background:linear-gradient(#3a907a 0,#3a907ad0 22%,#4c504e 62%,#404341 100%)"><i class="p" style="right:2.2px;top:1.7px;background:#4cf0c4"></i></div>
<div class="n" style="left:451.1px;top:386.7px;width:19.3px;height:8.1px"><div class="h" style="height:3.3px;background:linear-gradient(90deg,#4a7a3e 0,#4a7a3ee0 35%,#4a7a3e30 92%,#4a7a3e10 100%)"></div><b style="position:absolute;left:2.2px;top:0.9px;width:10.6px;height:1.1px;background:rgba(255,255,255,.62)"></b><i class="p" style="left:1.7px;top:4.7px;background:#5ad62c"></i><i class="p" style="right:1.7px;top:4.7px;background:#38e0b0"></i></div>
<div class="n" style="left:479.9px;top:373.1px;width:17.6px;height:13.1px"><div class="h" style="height:3.3px;background:linear-gradient(90deg,#9a9a9a 0,#9a9a9ae0 35%,#9a9a9a30 92%,#9a9a9a10 100%)"></div><b style="position:absolute;left:2.1px;top:0.9px;width:9.7px;height:1.1px;background:rgba(255,255,255,.62)"></b><i class="p" style="left:1.7px;top:4.7px;background:#f2f2f2"></i><i class="p" style="left:1.7px;top:8.6px;background:#a01818"></i><i class="p" style="right:1.7px;top:4.7px;background:#f2f2f2"></i><i class="p" style="right:1.7px;top:8.6px;background:#f2f2f2"></i></div>
<div class="g" style="left:482.4px;top:387.4px;width:17.4px;height:9.0px"><i class="p" style="left:1.7px;top:3.4px;background:#38e0b0"></i><i class="p" style="left:1.7px;top:6.8px;background:#38e0b0"></i><i class="p" style="right:1.7px;top:3.4px;background:#7a7a7a"></i></div>
<div class="g" style="left:508.9px;top:379.9px;width:19.3px;height:10.4px"><div class="h" style="background:linear-gradient(90deg,#3a907a,#3a907a40);height:2px;opacity:.85"></div><i class="p" style="left:1.7px;top:3.4px;background:#f2f2f2"></i><i class="p" style="left:1.7px;top:7.3px;background:#38e0b0"></i><i class="p" style="right:1.7px;top:3.4px;background:#7a7a7a"></i></div>
<div class="n" style="left:551.5px;top:340.5px;width:11.8px;height:17.9px"><div class="h" style="height:3.5px;background:linear-gradient(90deg,#a31d1d 0,#a31d1de0 35%,#a31d1d30 92%,#a31d1d10 100%)"></div><b style="position:absolute;left:1.4px;top:0.9px;width:6.5px;height:1.1px;background:rgba(255,255,255,.62)"></b><i class="p" style="right:1.7px;top:8.8px;background:#f2f2f2"></i><i class="p" style="right:1.7px;top:12.7px;background:#f2f2f2"></i></div>
<div class="g" style="left:567.8px;top:347.7px;width:19.9px;height:9.5px"><i class="p" style="left:1.7px;top:3.4px;background:#7a7a7a"></i><i class="p" style="left:1.7px;top:7.3px;background:#7a7a7a"></i><i class="p" style="right:1.7px;top:3.4px;background:#7a7a7a"></i></div>
<div class="g" style="left:551.5px;top:359px;width:31.5px;height:10.9px"><div class="h" style="background:linear-gradient(90deg,#4f963a,#4f963a40);height:2px;opacity:.85"></div><i class="p" style="left:1.7px;top:3.4px;background:#5ad62c"></i><i class="p" style="right:1.7px;top:3.4px;background:#38e0b0"></i><b style="position:absolute;left:10.8px;top:4.2px;width:10px;height:2.600px;background:rgba(200,235,180,.5);border-radius:1px"></b></div>
<div class="n" style="left:592.0px;top:342.7px;width:16.5px;height:14.1px"><div class="h" style="height:3.3px;background:linear-gradient(90deg,#9a9a9a 0,#9a9a9ae0 35%,#9a9a9a30 92%,#9a9a9a10 100%)"></div><b style="position:absolute;left:2.0px;top:0.9px;width:9.1px;height:1.1px;background:rgba(255,255,255,.62)"></b><i class="p" style="left:1.7px;top:4.7px;background:#f2f2f2"></i><i class="p" style="left:1.7px;top:8.6px;background:#a01818"></i><i class="p" style="right:1.7px;top:4.7px;background:#f2f2f2"></i><i class="p" style="right:1.7px;top:8.6px;background:#f2f2f2"></i></div>
<div class="g" style="left:623.3px;top:340.5px;width:18.8px;height:11.3px"><div class="h" style="background:linear-gradient(90deg,#a31d1d,#a31d1d40);height:2px;opacity:.85"></div><i class="p" style="left:1.7px;top:3.4px;background:#f2f2f2"></i><i class="p" style="left:1.7px;top:7.3px;background:#a01818"></i><i class="p" style="right:1.7px;top:3.4px;background:#f2f2f2"></i></div>
<div class="g" style="left:623.3px;top:354.5px;width:18.8px;height:10.7px"><div class="h" style="background:linear-gradient(90deg,#a31d1d,#a31d1d40);height:2px;opacity:.85"></div><i class="p" style="left:1.7px;top:3.4px;background:#f2f2f2"></i><i class="p" style="left:1.7px;top:7.3px;background:#a01818"></i><i class="p" style="right:1.7px;top:3.4px;background:#f2f2f2"></i></div>
<div class="n" style="left:84.6px;top:402.9px;width:20.1px;height:43.1px"><div class="h" style="height:3.3px;background:linear-gradient(90deg,#9a9a9a 0,#9a9a9ae0 35%,#9a9a9a30 92%,#9a9a9a10 100%)"></div><b style="position:absolute;left:2.2px;top:0.9px;width:11.1px;height:1.1px;background:rgba(255,255,255,.62)"></b><i class="p" style="left:1.7px;top:4.7px;background:#f2f2f2"></i><i class="p" style="right:1.7px;top:4.7px;background:#f2f2f2"></i><i class="p" style="right:1.7px;top:8.6px;background:#f2f2f2"></i><i class="p" style="right:1.7px;top:12.5px;background:#f2f2f2"></i><i class="p" style="right:1.7px;top:16.4px;background:#f2f2f2"></i><i class="p" style="right:1.7px;top:20.3px;background:#f2f2f2"></i><i class="p" style="right:1.7px;top:24.2px;background:#f2f2f2"></i><i class="p" style="right:1.7px;top:28.1px;background:#f2f2f2"></i><i class="p" style="right:1.7px;top:32.0px;background:#f2f2f2"></i></div>
<div class="n" style="left:75.3px;top:446.6px;width:36.3px;height:16.3px"><div class="h" style="height:5.8px;background:linear-gradient(90deg,#a31d1d 0,#a31d1de0 35%,#a31d1d30 92%,#a31d1d10 100%)"></div><b style="position:absolute;left:2.2px;top:1.1px;width:20.0px;height:1.1px;background:rgba(255,255,255,.62)"></b><b style="position:absolute;left:1.5px;top:3.6px;width:28.3px;height:1px;background:rgba(200,220,235,.28)"></b><i class="p" style="right:1.7px;top:11.8px;background:#f2f2f2"></i><i class="p" style="right:1.7px;top:14.1px;background:#38e0b0"></i></div>
<div class="g" style="left:120.6px;top:391.3px;width:20.7px;height:10.3px"><i class="p" style="left:1.7px;top:3.4px;background:#38e0b0"></i><i class="p" style="left:1.7px;top:7.3px;background:#38e0b0"></i><i class="p" style="right:1.7px;top:3.4px;background:#7a7a7a"></i></div>
<div class="g" style="left:120.6px;top:405.1px;width:20.7px;height:10.3px"><i class="p" style="left:1.7px;top:3.4px;background:#38e0b0"></i><i class="p" style="left:1.7px;top:7.3px;background:#38e0b0"></i><i class="p" style="right:1.7px;top:3.4px;background:#7a7a7a"></i></div>
<div class="g" style="left:120.6px;top:419.2px;width:20.7px;height:10.3px"><i class="p" style="left:1.7px;top:3.4px;background:#38e0b0"></i><i class="p" style="left:1.7px;top:7.3px;background:#38e0b0"></i><i class="p" style="right:1.7px;top:3.4px;background:#7a7a7a"></i></div>
<div class="g" style="left:120.6px;top:432.9px;width:20.7px;height:10.3px"><i class="p" style="left:1.7px;top:3.4px;background:#38e0b0"></i><i class="p" style="left:1.7px;top:7.3px;background:#38e0b0"></i><i class="p" style="right:1.7px;top:3.4px;background:#7a7a7a"></i></div>
<div class="g" style="left:120.6px;top:446.6px;width:20.7px;height:10.3px"><i class="p" style="left:1.7px;top:3.4px;background:#38e0b0"></i><i class="p" style="left:1.7px;top:7.3px;background:#38e0b0"></i><i class="p" style="right:1.7px;top:3.4px;background:#7a7a7a"></i></div>
<div class="g" style="left:120.6px;top:460.4px;width:20.7px;height:10.3px"><i class="p" style="left:1.7px;top:3.4px;background:#38e0b0"></i><i class="p" style="left:1.7px;top:7.3px;background:#38e0b0"></i><i class="p" style="right:1.7px;top:3.4px;background:#7a7a7a"></i></div>
<div class="g" style="left:120.6px;top:474.1px;width:20.7px;height:10.3px"><i class="p" style="left:1.7px;top:3.4px;background:#38e0b0"></i><i class="p" style="left:1.7px;top:7.3px;background:#38e0b0"></i><i class="p" style="right:1.7px;top:3.4px;background:#7a7a7a"></i></div>
<div class="n" style="left:147.3px;top:388.8px;width:16.5px;height:13.7px"><div class="h" style="height:3.3px;background:linear-gradient(90deg,#9a9a9a 0,#9a9a9ae0 35%,#9a9a9a30 92%,#9a9a9a10 100%)"></div><b style="position:absolute;left:2.0px;top:0.9px;width:9.1px;height:1.1px;background:rgba(255,255,255,.62)"></b><i class="p" style="left:1.7px;top:4.7px;background:#f2f2f2"></i><i class="p" style="left:1.7px;top:8.6px;background:#a01818"></i><i class="p" style="right:1.7px;top:4.7px;background:#f2f2f2"></i><i class="p" style="right:1.7px;top:8.6px;background:#f2f2f2"></i></div>
<div class="n" style="left:147.3px;top:402.9px;width:16.5px;height:13.7px"><div class="h" style="height:3.3px;background:linear-gradient(90deg,#9a9a9a 0,#9a9a9ae0 35%,#9a9a9a30 92%,#9a9a9a10 100%)"></div><b style="position:absolute;left:2.0px;top:0.9px;width:9.1px;height:1.1px;background:rgba(255,255,255,.62)"></b><i class="p" style="left:1.7px;top:4.7px;background:#f2f2f2"></i><i class="p" style="left:1.7px;top:8.6px;background:#a01818"></i><i class="p" style="right:1.7px;top:4.7px;background:#f2f2f2"></i><i class="p" style="right:1.7px;top:8.6px;background:#f2f2f2"></i></div>
<div class="n" style="left:147.3px;top:416.9px;width:16.5px;height:13.7px"><div class="h" style="height:3.3px;background:linear-gradient(90deg,#9a9a9a 0,#9a9a9ae0 35%,#9a9a9a30 92%,#9a9a9a10 100%)"></div><b style="position:absolute;left:2.0px;top:0.9px;width:9.1px;height:1.1px;background:rgba(255,255,255,.62)"></b><i class="p" style="left:1.7px;top:4.7px;background:#f2f2f2"></i><i class="p" style="left:1.7px;top:8.6px;background:#a01818"></i><i class="p" style="right:1.7px;top:4.7px;background:#f2f2f2"></i><i class="p" style="right:1.7px;top:8.6px;background:#f2f2f2"></i></div>
<div class="n" style="left:147.3px;top:431px;width:16.5px;height:13.7px"><div class="h" style="height:3.3px;background:linear-gradient(90deg,#9a9a9a 0,#9a9a9ae0 35%,#9a9a9a30 92%,#9a9a9a10 100%)"></div><b style="position:absolute;left:2.0px;top:0.9px;width:9.1px;height:1.1px;background:rgba(255,255,255,.62)"></b><i class="p" style="left:1.7px;top:4.7px;background:#f2f2f2"></i><i class="p" style="left:1.7px;top:8.6px;background:#a01818"></i><i class="p" style="right:1.7px;top:4.7px;background:#f2f2f2"></i><i class="p" style="right:1.7px;top:8.6px;background:#f2f2f2"></i></div>
<div class="n" style="left:147.3px;top:444.7px;width:16.5px;height:13.7px"><div class="h" style="height:3.3px;background:linear-gradient(90deg,#9a9a9a 0,#9a9a9ae0 35%,#9a9a9a30 92%,#9a9a9a10 100%)"></div><b style="position:absolute;left:2.0px;top:0.9px;width:9.1px;height:1.1px;background:rgba(255,255,255,.62)"></b><i class="p" style="left:1.7px;top:4.7px;background:#f2f2f2"></i><i class="p" style="left:1.7px;top:8.6px;background:#a01818"></i><i class="p" style="right:1.7px;top:4.7px;background:#f2f2f2"></i><i class="p" style="right:1.7px;top:8.6px;background:#f2f2f2"></i></div>
<div class="n" style="left:147.3px;top:458.6px;width:16.5px;height:13.7px"><div class="h" style="height:3.3px;background:linear-gradient(90deg,#9a9a9a 0,#9a9a9ae0 35%,#9a9a9a30 92%,#9a9a9a10 100%)"></div><b style="position:absolute;left:2.0px;top:0.9px;width:9.1px;height:1.1px;background:rgba(255,255,255,.62)"></b><i class="p" style="left:1.7px;top:4.7px;background:#f2f2f2"></i><i class="p" style="left:1.7px;top:8.6px;background:#a01818"></i><i class="p" style="right:1.7px;top:4.7px;background:#f2f2f2"></i><i class="p" style="right:1.7px;top:8.6px;background:#f2f2f2"></i></div>
<div class="n" style="left:147.3px;top:472.3px;width:16.5px;height:13.7px"><div class="h" style="height:3.3px;background:linear-gradient(90deg,#9a9a9a 0,#9a9a9ae0 35%,#9a9a9a30 92%,#9a9a9a10 100%)"></div><b style="position:absolute;left:2.0px;top:0.9px;width:9.1px;height:1.1px;background:rgba(255,255,255,.62)"></b><i class="p" style="left:1.7px;top:4.7px;background:#f2f2f2"></i><i class="p" style="left:1.7px;top:8.6px;background:#a01818"></i><i class="p" style="right:1.7px;top:4.7px;background:#f2f2f2"></i><i class="p" style="right:1.7px;top:8.6px;background:#f2f2f2"></i></div>
<div class="g" style="left:175.6px;top:395.8px;width:19.7px;height:5.6px;border-radius:2.8px;background:linear-gradient(#8a3434 0,#8a3434d0 22%,#4c504e 62%,#404341 100%)"><i class="p" style="right:2.2px;top:1.9px;background:#b02424"></i></div>
<div class="g" style="left:175.6px;top:411.3px;width:19.7px;height:6.0px;border-radius:3.0px;background:linear-gradient(#8a3434 0,#8a3434d0 22%,#4c504e 62%,#404341 100%)"><i class="p" style="right:2.2px;top:2.1px;background:#b02424"></i></div>
<div class="n" style="left:197.9px;top:388.8px;width:16.1px;height:14.1px"><div class="h" style="height:3.3px;background:linear-gradient(90deg,#9a9a9a 0,#9a9a9ae0 35%,#9a9a9a30 92%,#9a9a9a10 100%)"></div><b style="position:absolute;left:1.9px;top:0.9px;width:8.9px;height:1.1px;background:rgba(255,255,255,.62)"></b><i class="p" style="left:1.7px;top:4.7px;background:#f2f2f2"></i><i class="p" style="left:1.7px;top:8.6px;background:#a01818"></i><i class="p" style="right:1.7px;top:4.7px;background:#7a7a7a"></i><i class="p" style="right:1.7px;top:8.6px;background:#f2f2f2"></i></div>
<div class="n" style="left:197.9px;top:404.8px;width:16.1px;height:14.0px"><div class="h" style="height:3.3px;background:linear-gradient(90deg,#9a9a9a 0,#9a9a9ae0 35%,#9a9a9a30 92%,#9a9a9a10 100%)"></div><b style="position:absolute;left:1.9px;top:0.9px;width:8.9px;height:1.1px;background:rgba(255,255,255,.62)"></b><i class="p" style="left:1.7px;top:4.7px;background:#f2f2f2"></i><i class="p" style="left:1.7px;top:8.6px;background:#a01818"></i><i class="p" style="right:1.7px;top:4.7px;background:#7a7a7a"></i><i class="p" style="right:1.7px;top:8.6px;background:#f2f2f2"></i></div>
<div class="n" style="left:336.3px;top:399.8px;width:18.5px;height:9.8px"><div class="h" style="height:3.3px;background:linear-gradient(90deg,#37729e 0,#37729ee0 35%,#37729e30 92%,#37729e10 100%)"></div><b style="position:absolute;left:2.2px;top:0.9px;width:10.2px;height:1.1px;background:rgba(255,255,255,.62)"></b><i class="p" style="right:1.7px;top:4.7px;background:#5ad62c"></i><i class="p" style="right:1.7px;top:7.6px;background:#5ad62c"></i></div>
<div class="n" style="left:338.8px;top:411.5px;width:19.4px;height:42.0px"><div class="h" style="height:3.3px;background:linear-gradient(90deg,#9a9a9a 0,#9a9a9ae0 35%,#9a9a9a30 92%,#9a9a9a10 100%)"></div><b style="position:absolute;left:2.2px;top:0.9px;width:10.7px;height:1.1px;background:rgba(255,255,255,.62)"></b><i class="p" style="left:1.7px;top:4.7px;background:#f2f2f2"></i><i class="p" style="right:1.7px;top:4.7px;background:#f2f2f2"></i><i class="p" style="right:1.7px;top:8.6px;background:#f2f2f2"></i><i class="p" style="right:1.7px;top:12.5px;background:#f2f2f2"></i><i class="p" style="right:1.7px;top:16.4px;background:#f2f2f2"></i><i class="p" style="right:1.7px;top:20.3px;background:#f2f2f2"></i><i class="p" style="right:1.7px;top:24.2px;background:#f2f2f2"></i><i class="p" style="right:1.7px;top:28.1px;background:#f2f2f2"></i><i class="p" style="right:1.7px;top:32.0px;background:#7a7a7a"></i></div>
<div class="n" style="left:382.2px;top:427.7px;width:13.3px;height:18.0px"><div class="h" style="height:3.5px;background:linear-gradient(90deg,#a31d1d 0,#a31d1de0 35%,#a31d1d30 92%,#a31d1d10 100%)"></div><b style="position:absolute;left:1.6px;top:0.9px;width:7.3px;height:1.1px;background:rgba(255,255,255,.62)"></b><i class="p" style="right:1.7px;top:8.8px;background:#f2f2f2"></i><i class="p" style="right:1.7px;top:12.7px;background:#f2f2f2"></i></div>
<div class="n" style="left:400.7px;top:423.2px;width:14.1px;height:27.0px"><div class="h" style="height:3.3px;background:linear-gradient(90deg,#9a9a9a 0,#9a9a9ae0 35%,#9a9a9a30 92%,#9a9a9a10 100%)"></div><b style="position:absolute;left:1.7px;top:0.9px;width:7.8px;height:1.1px;background:rgba(255,255,255,.62)"></b><i class="p" style="left:1.7px;top:4.7px;background:#f2f2f2"></i><i class="p" style="left:1.7px;top:8.6px;background:#f2f2f2"></i><i class="p" style="left:1.7px;top:12.5px;background:#f2f2f2"></i><i class="p" style="right:1.7px;top:4.7px;background:#f2f2f2"></i></div>
<div class="n" style="left:382.2px;top:457.8px;width:14.6px;height:18.2px"><div class="h" style="height:3.5px;background:linear-gradient(90deg,#a31d1d 0,#a31d1de0 35%,#a31d1d30 92%,#a31d1d10 100%)"></div><b style="position:absolute;left:1.8px;top:0.9px;width:8.0px;height:1.1px;background:rgba(255,255,255,.62)"></b><i class="p" style="right:1.7px;top:8.8px;background:#f2f2f2"></i><i class="p" style="right:1.7px;top:12.7px;background:#f2f2f2"></i></div>
<div class="n" style="left:400.7px;top:453.1px;width:14.1px;height:26.8px"><div class="h" style="height:3.3px;background:linear-gradient(90deg,#9a9a9a 0,#9a9a9ae0 35%,#9a9a9a30 92%,#9a9a9a10 100%)"></div><b style="position:absolute;left:1.7px;top:0.9px;width:7.8px;height:1.1px;background:rgba(255,255,255,.62)"></b><i class="p" style="left:1.7px;top:4.7px;background:#f2f2f2"></i><i class="p" style="left:1.7px;top:8.6px;background:#f2f2f2"></i><i class="p" style="left:1.7px;top:12.5px;background:#f2f2f2"></i><i class="p" style="right:1.7px;top:4.7px;background:#f2f2f2"></i></div>
<div class="n" style="left:434.3px;top:425.8px;width:15.7px;height:13.1px"><div class="h" style="height:3.3px;background:linear-gradient(90deg,#37729e 0,#37729ee0 35%,#37729e30 92%,#37729e10 100%)"></div><b style="position:absolute;left:1.9px;top:0.9px;width:8.6px;height:1.1px;background:rgba(255,255,255,.62)"></b><i class="p" style="left:1.7px;top:4.7px;background:#f2f2f2"></i><i class="p" style="left:1.7px;top:8.6px;background:#5ad62c"></i><i class="p" style="right:1.7px;top:4.7px;background:#f2f2f2"></i></div>
<div class="n" style="left:432.0px;top:453.1px;width:15.6px;height:13.1px"><div class="h" style="height:3.3px;background:linear-gradient(90deg,#37729e 0,#37729ee0 35%,#37729e30 92%,#37729e10 100%)"></div><b style="position:absolute;left:1.9px;top:0.9px;width:8.6px;height:1.1px;background:rgba(255,255,255,.62)"></b><i class="p" style="left:1.7px;top:4.7px;background:#f2f2f2"></i><i class="p" style="left:1.7px;top:8.6px;background:#5ad62c"></i><i class="p" style="right:1.7px;top:4.7px;background:#f2f2f2"></i></div>
<div class="g" style="left:475.4px;top:439.4px;width:19.7px;height:5.3px;border-radius:2.7px;background:linear-gradient(#4f963a 0,#4f963ad0 22%,#4c504e 62%,#404341 100%)"><i class="p" style="right:2.2px;top:1.8px;background:#7cf04c"></i></div>
<div class="g" style="left:473.0px;top:446.3px;width:19.1px;height:5.2px;border-radius:2.6px;background:linear-gradient(#3a907a 0,#3a907ad0 22%,#4c504e 62%,#404341 100%)"><i class="p" style="right:2.2px;top:1.7px;background:#4cf0c4"></i></div>
<div class="g" style="left:508.8px;top:426.2px;width:22.4px;height:9.7px"><i class="p" style="left:1.7px;top:3.4px;background:#38e0b0"></i><i class="p" style="left:1.7px;top:7.3px;background:#38e0b0"></i><i class="p" style="right:1.7px;top:3.4px;background:#7a7a7a"></i></div>
<div class="g" style="left:506.6px;top:437.9px;width:23.0px;height:10.1px"><div class="h" style="background:linear-gradient(90deg,#4f963a,#4f963a40);height:2px;opacity:.85"></div><i class="p" style="left:1.7px;top:3.4px;background:#38e0b0"></i><i class="p" style="left:1.7px;top:7.3px;background:#38e0b0"></i><i class="p" style="right:1.7px;top:3.4px;background:#5ad62c"></i><b style="position:absolute;left:8.5px;top:3.9px;width:6px;height:2.600px;background:rgba(235,235,235,.5);border-radius:1px"></b></div>
<div class="n" style="left:503.9px;top:449.2px;width:18.9px;height:7.8px"><div class="h" style="height:3.3px;background:linear-gradient(90deg,#4a7a3e 0,#4a7a3ee0 35%,#4a7a3e30 92%,#4a7a3e10 100%)"></div><b style="position:absolute;left:2.2px;top:0.9px;width:10.4px;height:1.1px;background:rgba(255,255,255,.62)"></b><i class="p" style="left:1.7px;top:4.7px;background:#5ad62c"></i><i class="p" style="right:1.7px;top:4.7px;background:#38e0b0"></i></div>
<div class="g" style="left:508.8px;top:458.4px;width:22.4px;height:9.4px"><i class="p" style="left:1.7px;top:3.4px;background:#38e0b0"></i><i class="p" style="left:1.7px;top:7.2px;background:#38e0b0"></i><i class="p" style="right:1.7px;top:3.4px;background:#7a7a7a"></i></div>
<div class="g" style="left:540.0px;top:439.4px;width:17.0px;height:5.3px;border-radius:2.7px;background:linear-gradient(#3a907a 0,#3a907ad0 22%,#4c504e 62%,#404341 100%)"><i class="p" style="right:2.2px;top:1.8px;background:#4cf0c4"></i></div>
<div class="g" style="left:540.0px;top:455.5px;width:17.0px;height:5.4px;border-radius:2.7px;background:linear-gradient(#3a907a 0,#3a907ad0 22%,#4c504e 62%,#404341 100%)"><i class="p" style="right:2.2px;top:1.8px;background:#4cf0c4"></i></div>
<div class="g" style="left:559.7px;top:430.9px;width:19.4px;height:13.5px"><div class="h" style="background:linear-gradient(90deg,#37729e,#37729e40);height:2px;opacity:.85"></div><i class="p" style="left:1.7px;top:3.4px;background:#f2f2f2"></i><i class="p" style="left:1.7px;top:7.3px;background:#5ad62c"></i><i class="p" style="left:1.7px;top:11.2px;background:#5ad62c"></i><i class="p" style="right:1.7px;top:3.4px;background:#f2f2f2"></i></div>
<div class="g" style="left:559.7px;top:447px;width:19.4px;height:13.5px"><div class="h" style="background:linear-gradient(90deg,#37729e,#37729e40);height:2px;opacity:.85"></div><i class="p" style="left:1.7px;top:3.4px;background:#f2f2f2"></i><i class="p" style="left:1.7px;top:7.3px;background:#5ad62c"></i><i class="p" style="left:1.7px;top:11.2px;background:#5ad62c"></i><i class="p" style="right:1.7px;top:3.4px;background:#f2f2f2"></i></div>
<div class="n" style="left:595.6px;top:444px;width:14.8px;height:17.4px"><div class="h" style="height:3.5px;background:linear-gradient(90deg,#a31d1d 0,#a31d1de0 35%,#a31d1d30 92%,#a31d1d10 100%)"></div><b style="position:absolute;left:1.8px;top:0.9px;width:8.1px;height:1.1px;background:rgba(255,255,255,.62)"></b><i class="p" style="right:1.7px;top:8.8px;background:#f2f2f2"></i><i class="p" style="right:1.7px;top:12.7px;background:#f2f2f2"></i></div>
<div class="n" style="left:612.2px;top:437.4px;width:17.0px;height:13.3px"><div class="h" style="height:3.3px;background:linear-gradient(90deg,#9a9a9a 0,#9a9a9ae0 35%,#9a9a9a30 92%,#9a9a9a10 100%)"></div><b style="position:absolute;left:2.0px;top:0.9px;width:9.4px;height:1.1px;background:rgba(255,255,255,.62)"></b><i class="p" style="left:1.7px;top:4.7px;background:#f2f2f2"></i><i class="p" style="left:1.7px;top:8.6px;background:#a01818"></i><i class="p" style="right:1.7px;top:4.7px;background:#f2f2f2"></i><i class="p" style="right:1.7px;top:8.6px;background:#f2f2f2"></i></div>
<div class="n" style="left:612.2px;top:453px;width:17.0px;height:13.8px"><div class="h" style="height:3.3px;background:linear-gradient(90deg,#9a9a9a 0,#9a9a9ae0 35%,#9a9a9a30 92%,#9a9a9a10 100%)"></div><b style="position:absolute;left:2.0px;top:0.9px;width:9.4px;height:1.1px;background:rgba(255,255,255,.62)"></b><i class="p" style="left:1.7px;top:4.7px;background:#f2f2f2"></i><i class="p" style="left:1.7px;top:8.6px;background:#a01818"></i><i class="p" style="right:1.7px;top:4.7px;background:#f2f2f2"></i><i class="p" style="right:1.7px;top:8.6px;background:#f2f2f2"></i></div>
<div class="g" style="left:662.5px;top:416.2px;width:19.0px;height:5.7px;border-radius:2.8px;background:linear-gradient(#4f963a 0,#4f963ad0 22%,#4c504e 62%,#404341 100%)"><i class="p" style="right:2.2px;top:1.9px;background:#7cf04c"></i></div>
<div class="g" style="left:646.3px;top:423.3px;width:18.5px;height:10.8px"><div class="h" style="background:linear-gradient(90deg,#3a907a,#3a907a40);height:2px;opacity:.85"></div><i class="p" style="left:1.7px;top:3.4px;background:#f2f2f2"></i><i class="p" style="left:1.7px;top:7.3px;background:#38e0b0"></i><i class="p" style="right:1.7px;top:3.4px;background:#f2f2f2"></i><i class="p" style="right:1.7px;top:7.3px;background:#38e0b0"></i></div>
<div class="n" style="left:647.7px;top:434.7px;width:19.3px;height:8.4px"><div class="h" style="height:3.3px;background:linear-gradient(90deg,#4a7a3e 0,#4a7a3ee0 35%,#4a7a3e30 92%,#4a7a3e10 100%)"></div><b style="position:absolute;left:2.2px;top:0.9px;width:10.6px;height:1.1px;background:rgba(255,255,255,.62)"></b><i class="p" style="left:1.7px;top:4.7px;background:#5ad62c"></i><i class="p" style="right:1.7px;top:4.7px;background:#38e0b0"></i></div>
<div class="g" style="left:650.8px;top:446.2px;width:18.9px;height:9.1px"><div class="h" style="background:linear-gradient(90deg,#37729e,#37729e40);height:2px;opacity:.85"></div><i class="p" style="right:1.7px;top:3.4px;background:#5ad62c"></i><i class="p" style="right:1.7px;top:6.9px;background:#5ad62c"></i></div>
<div class="n" style="left:647.7px;top:457.5px;width:19.3px;height:8.6px"><div class="h" style="height:3.3px;background:linear-gradient(90deg,#4a7a3e 0,#4a7a3ee0 35%,#4a7a3e30 92%,#4a7a3e10 100%)"></div><b style="position:absolute;left:2.2px;top:0.9px;width:10.6px;height:1.1px;background:rgba(255,255,255,.62)"></b><i class="p" style="left:1.7px;top:4.7px;background:#5ad62c"></i><i class="p" style="right:1.7px;top:4.7px;background:#38e0b0"></i></div>
<div class="g" style="left:646.3px;top:467.4px;width:18.5px;height:10.2px"><div class="h" style="background:linear-gradient(90deg,#3a907a,#3a907a40);height:2px;opacity:.85"></div><i class="p" style="left:1.7px;top:3.4px;background:#f2f2f2"></i><i class="p" style="left:1.7px;top:7.3px;background:#38e0b0"></i><i class="p" style="right:1.7px;top:7.3px;background:#38e0b0"></i></div>
<div class="g" style="left:679.5px;top:428.2px;width:22.1px;height:9.9px"><i class="p" style="left:1.7px;top:3.4px;background:#38e0b0"></i><i class="p" style="left:1.7px;top:7.3px;background:#38e0b0"></i><i class="p" style="right:1.7px;top:3.4px;background:#7a7a7a"></i></div>
<div class="g" style="left:679.5px;top:460.2px;width:22.1px;height:9.9px"><i class="p" style="left:1.7px;top:3.4px;background:#38e0b0"></i><i class="p" style="left:1.7px;top:7.3px;background:#38e0b0"></i><i class="p" style="right:1.7px;top:3.4px;background:#7a7a7a"></i></div>
<div class="g" style="left:703.4px;top:462.3px;width:22.1px;height:9.9px"><i class="p" style="left:1.7px;top:3.4px;background:#38e0b0"></i><i class="p" style="left:1.7px;top:7.3px;background:#38e0b0"></i><i class="p" style="right:1.7px;top:3.4px;background:#7a7a7a"></i></div>
<div class="g" style="left:700.7px;top:444px;width:19.8px;height:5.4px;border-radius:2.7px;background:linear-gradient(#37729e 0,#37729ed0 22%,#4c504e 62%,#404341 100%)"><i class="p" style="right:2.2px;top:1.8px;background:#34b4f4"></i></div>
<div class="n" style="left:729.9px;top:407.2px;width:37.7px;height:30.2px"><div class="h" style="height:5.8px;background:linear-gradient(90deg,#37729e 0,#37729ee0 35%,#37729e30 92%,#37729e10 100%)"></div><b style="position:absolute;left:2.2px;top:1.1px;width:20.0px;height:1.1px;background:rgba(255,255,255,.62)"></b><b style="position:absolute;left:1.5px;top:3.6px;width:29.4px;height:1px;background:rgba(200,220,235,.28)"></b><i class="p" style="left:1.7px;top:7.2px;background:#f2f2f2"></i><i class="p" style="left:1.7px;top:11.1px;background:#2c9cf0"></i><i class="p" style="left:1.7px;top:15.0px;background:#5ad62c"></i><i class="p" style="left:1.7px;top:18.9px;background:#5ad62c"></i><i class="p" style="left:1.7px;top:22.8px;background:#5ad62c"></i><i class="p" style="right:1.7px;top:7.2px;background:#7a7a7a"></i><i class="p" style="left:18.1px;bottom:1px;width:1.600px;height:1.600px;background:#ddd"></i></div>
<div class="n" style="left:729.9px;top:446.2px;width:37.7px;height:30.1px"><div class="h" style="height:5.8px;background:linear-gradient(90deg,#37729e 0,#37729ee0 35%,#37729e30 92%,#37729e10 100%)"></div><b style="position:absolute;left:2.2px;top:1.1px;width:20.0px;height:1.1px;background:rgba(255,255,255,.62)"></b><b style="position:absolute;left:1.5px;top:3.6px;width:29.4px;height:1px;background:rgba(200,220,235,.28)"></b><i class="p" style="left:1.7px;top:7.2px;background:#f2f2f2"></i><i class="p" style="left:1.7px;top:11.1px;background:#2c9cf0"></i><i class="p" style="left:1.7px;top:15.0px;background:#5ad62c"></i><i class="p" style="left:1.7px;top:18.9px;background:#5ad62c"></i><i class="p" style="left:1.7px;top:22.8px;background:#5ad62c"></i><i class="p" style="right:1.7px;top:7.2px;background:#f2f2f2"></i><i class="p" style="left:18.1px;bottom:1px;width:1.600px;height:1.600px;background:#ddd"></i></div>
<div class="g" style="left:468.0px;top:504.3px;width:17.1px;height:9.1px"><i class="p" style="left:1.7px;top:3.4px;background:#5ad62c"></i><i class="p" style="left:1.7px;top:6.9px;background:#5ad62c"></i><i class="p" style="right:1.7px;top:3.4px;background:#7a7a7a"></i></div>
<div class="g" style="left:468.0px;top:520px;width:17.1px;height:9.5px"><i class="p" style="left:1.7px;top:3.4px;background:#5ad62c"></i><i class="p" style="left:1.7px;top:7.3px;background:#5ad62c"></i><i class="p" style="right:1.7px;top:3.4px;background:#7a7a7a"></i></div>
<div class="n" style="left:494.5px;top:501.4px;width:16.5px;height:13.9px"><div class="h" style="height:3.3px;background:linear-gradient(90deg,#9a9a9a 0,#9a9a9ae0 35%,#9a9a9a30 92%,#9a9a9a10 100%)"></div><b style="position:absolute;left:2.0px;top:0.9px;width:9.1px;height:1.1px;background:rgba(255,255,255,.62)"></b><i class="p" style="left:1.7px;top:4.7px;background:#f2f2f2"></i><i class="p" style="left:1.7px;top:8.6px;background:#a01818"></i><i class="p" style="right:1.7px;top:4.7px;background:#f2f2f2"></i><i class="p" style="right:1.7px;top:8.6px;background:#7a7a7a"></i></div>
<div class="n" style="left:494.5px;top:517.4px;width:16.5px;height:13.9px"><div class="h" style="height:3.3px;background:linear-gradient(90deg,#9a9a9a 0,#9a9a9ae0 35%,#9a9a9a30 92%,#9a9a9a10 100%)"></div><b style="position:absolute;left:2.0px;top:0.9px;width:9.1px;height:1.1px;background:rgba(255,255,255,.62)"></b><i class="p" style="left:1.7px;top:4.7px;background:#f2f2f2"></i><i class="p" style="left:1.7px;top:8.6px;background:#a01818"></i><i class="p" style="right:1.7px;top:4.7px;background:#f2f2f2"></i><i class="p" style="right:1.7px;top:8.6px;background:#7a7a7a"></i></div>
<div class="g" style="left:523.8px;top:500px;width:19.3px;height:13.4px"><div class="h" style="background:linear-gradient(90deg,#37729e,#37729e40);height:2px;opacity:.85"></div><i class="p" style="left:1.7px;top:3.4px;background:#f2f2f2"></i><i class="p" style="left:1.7px;top:7.3px;background:#5ad62c"></i><i class="p" style="left:1.7px;top:11.2px;background:#5ad62c"></i><i class="p" style="right:1.7px;top:3.4px;background:#f2f2f2"></i><i class="p" style="right:1.7px;top:7.3px;background:#2c9cf0"></i></div>
<div class="g" style="left:523.8px;top:517.7px;width:19.3px;height:14.0px"><div class="h" style="background:linear-gradient(90deg,#37729e,#37729e40);height:2px;opacity:.85"></div><i class="p" style="left:1.7px;top:3.4px;background:#f2f2f2"></i><i class="p" style="left:1.7px;top:7.3px;background:#5ad62c"></i><i class="p" style="left:1.7px;top:11.2px;background:#5ad62c"></i><i class="p" style="right:1.7px;top:3.4px;background:#f2f2f2"></i><i class="p" style="right:1.7px;top:7.3px;background:#2c9cf0"></i></div>
<div class="g" style="left:489.9px;top:552.4px;width:18.9px;height:4.7px;border-radius:2.4px;background:linear-gradient(#37729e 0,#37729ed0 22%,#4c504e 62%,#404341 100%)"><i class="p" style="right:2.2px;top:1.5px;background:#34b4f4"></i></div>
<div class="n" style="left:479.7px;top:559px;width:25.5px;height:10.9px"><div class="h" style="height:3.3px;background:linear-gradient(90deg,#4a7a3e 0,#4a7a3ee0 35%,#4a7a3e30 92%,#4a7a3e10 100%)"></div><b style="position:absolute;left:2.2px;top:0.9px;width:14.0px;height:1.1px;background:rgba(255,255,255,.62)"></b><i class="p" style="left:1.7px;top:4.7px;background:#5ad62c"></i><i class="p" style="right:1.7px;top:4.7px;background:#f06ab0"></i></div>
<div class="n" style="left:518.6px;top:549.5px;width:44.2px;height:20.0px"><div class="h" style="height:5.8px;background:linear-gradient(90deg,#37729e 0,#37729ee0 35%,#37729e30 92%,#37729e10 100%)"></div><b style="position:absolute;left:2.2px;top:1.1px;width:20.0px;height:1.1px;background:rgba(255,255,255,.62)"></b><b style="position:absolute;left:1.5px;top:3.6px;width:34.5px;height:1px;background:rgba(200,220,235,.28)"></b><i class="p" style="left:1.7px;top:7.2px;background:#f2f2f2"></i><i class="p" style="left:1.7px;top:11.1px;background:#2c9cf0"></i><i class="p" style="left:1.7px;top:15.0px;background:#f06ab0"></i><i class="p" style="right:1.7px;top:7.2px;background:#f2f2f2"></i><i class="p" style="left:21.3px;bottom:1px;width:1.600px;height:1.600px;background:#ddd"></i></div>
<div class="a" style="left:447.5px;top:423.9px;width:3.8px;height:3.8px;border-radius:2px;background:#ececec"></div>
<div class="a" style="left:445.6px;top:452.0px;width:3.8px;height:3.8px;border-radius:2px;background:#ececec"></div>
<div class="t" style="left:668.0px;top:540px;font-size:40.5px;font-weight:bold;color:rgba(255,255,255,.25);transform-origin:0 0;transform:scaleX(.838);letter-spacing:0">BLUEPRINT</div>
</div>
<div class="a" style="left:227.5px;top:84px;width:869px;height:24.3px;background:rgba(13,13,13,.87);"></div>
<div class="a" style="left:258px;top:86px;width:1px;height:20px;background:#1e1e1e;"></div>
<div class="a" style="left:311.5px;top:86px;width:1px;height:20px;background:#1e1e1e;"></div>
<svg style="left:232px;top:90px" width="9" height="11" viewBox="0 0 9 11"><path d="M0 .3h5.500v1H1.300v7.500H0z" fill="#6e6e6e"/><path d="M2.500 2.300h5.800v8.500L5.400 8.200 2.500 10.800z" fill="#d0d0d0"/></svg>
<svg style="left:244.5px;top:94px" width="6.5" height="3.7" viewBox="0 0 7 4"><path d="M.5.500l3 3 3-3" fill="none" stroke="#d0d0d0" stroke-width="1.100"/></svg>
<svg style="left:265px;top:90px" width="13" height="11" viewBox="0 0 13 11"><path d="M0 5.500L5.800.3v3.300h7v3.800h-7v3.300z" fill="#8e8e8e"/></svg>
<svg style="left:290.500px;top:90px" width="13" height="11" viewBox="0 0 13 11"><path d="M13 5.500L7.200.3v3.300h-7v3.800h7v3.300z" fill="#8e8e8e"/></svg>
<svg style="left:319px;top:88.5px" width="14.5" height="14.5" viewBox="0 0 10 10"><rect x="0" y="0.300" width="3.900" height="3.700" rx=".7" fill="#d4d4d4"/><rect x="6.300" y="1" width="3.400" height="2.500" rx=".6" fill="#d4d4d4"/><rect x=".4" y="6.700" width="3.200" height="2.600" rx=".6" fill="#d4d4d4"/><rect x="6.300" y="6.100" width="3.400" height="2.600" rx=".6" fill="#d4d4d4"/><path d="M3.700 2.200h2.600M2.800 3.800l3.700 3.200" stroke="#d4d4d4" stroke-width=".9"/></svg>
<div class="t" style="left:344.4px;top:88.3px;font-size:13.3px;color:#9c9c9c;letter-spacing:-0.283px;">Safe5_Blueprint</div>
<svg style="left:439.500px;top:90.500px" width="7" height="11" viewBox="0 0 7 11"><path d="M1 .8l4.800 4.700L1 10.200" fill="none" stroke="#e0e0e0" stroke-width="1.300"/></svg>
<div class="t" style="left:452.5px;top:88.3px;font-size:13.3px;color:#9c9c9c;letter-spacing:-0.561px;">Event Graph</div>
<div class="t" style="left:1047.5px;top:88.5px;font-size:12px;color:#4a4a4a;letter-spacing:-0.238px;font-weight:bold">Zoom -7</div>
</div></body></html>
